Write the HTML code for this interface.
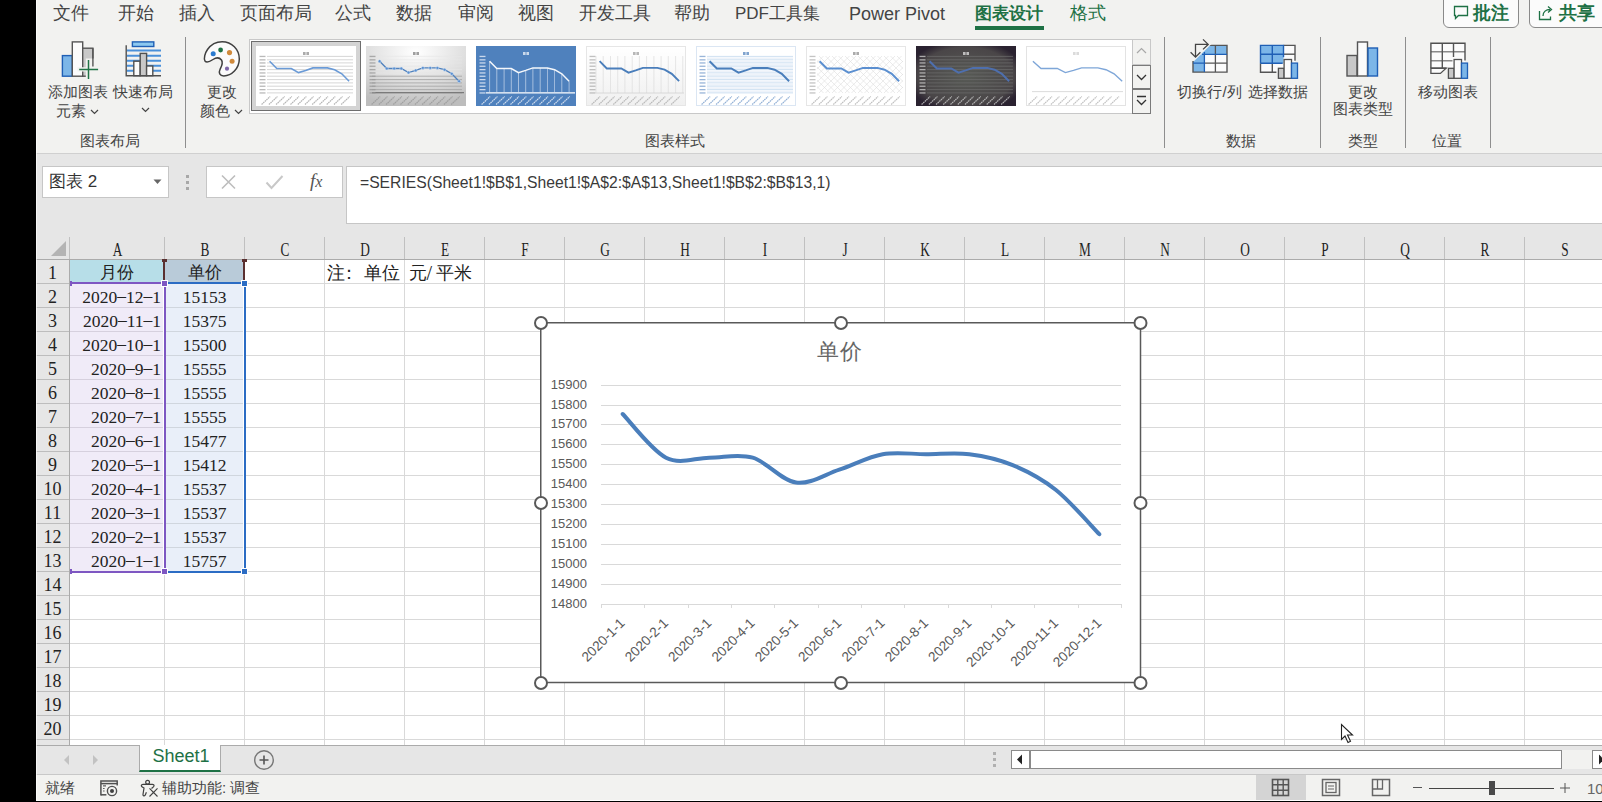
<!DOCTYPE html><html><head><meta charset="utf-8"><style>
*{box-sizing:border-box}
body{margin:0;width:1602px;height:802px;overflow:hidden;position:relative;background:#fff;font-family:"Liberation Sans",sans-serif;color:#444}
.a{position:absolute}
.t{position:absolute;white-space:nowrap;line-height:1}
.serif{font-family:"Liberation Serif",serif}
</style></head><body>

<div class="a" style="left:0;top:0;width:36px;height:802px;background:#000"></div>
<div class="a" style="left:36px;top:0;width:1566px;height:154px;background:#f2f2f0;border-bottom:1px solid #d0d0d0"></div>
<div class="t" style="left:53px;top:4.5px;font-size:17.5px;color:#444">文件</div>
<div class="t" style="left:118px;top:4.5px;font-size:17.5px;color:#444">开始</div>
<div class="t" style="left:179px;top:4.5px;font-size:17.5px;color:#444">插入</div>
<div class="t" style="left:240px;top:4.5px;font-size:17.5px;color:#444">页面布局</div>
<div class="t" style="left:335px;top:4.5px;font-size:17.5px;color:#444">公式</div>
<div class="t" style="left:396px;top:4.5px;font-size:17.5px;color:#444">数据</div>
<div class="t" style="left:458px;top:4.5px;font-size:17.5px;color:#444">审阅</div>
<div class="t" style="left:518px;top:4.5px;font-size:17.5px;color:#444">视图</div>
<div class="t" style="left:579px;top:4.5px;font-size:17.5px;color:#444">开发工具</div>
<div class="t" style="left:674px;top:4.5px;font-size:17.5px;color:#444">帮助</div>
<div class="t" style="left:735px;top:4.5px;font-size:17px;color:#444">PDF工具集</div>
<div class="t" style="left:849px;top:4.5px;font-size:18px;color:#444">Power Pivot</div>
<div class="t" style="left:975px;top:4.5px;font-size:17px;color:#1e7145;font-weight:bold">图表设计</div>
<div class="a" style="left:975px;top:26px;width:69px;height:4px;background:#1e7145"></div>
<div class="t" style="left:1070px;top:4.5px;font-size:17.5px;color:#1e7145">格式</div>
<div class="a" style="left:1443px;top:-6px;width:76px;height:34px;border:1px solid #8a8a8a;border-radius:6px;background:#fbfbfb"></div>
<svg class="a" style="left:1453px;top:5px" width="16" height="15" viewBox="0 0 16 15"><path d="M1.5 1.5h13v9h-9l-3 3v-3h-1z" fill="none" stroke="#1e7145" stroke-width="1.3"/></svg>
<div class="t" style="left:1473px;top:3.5px;font-size:18px;color:#1e7145;font-weight:bold">批注</div>
<div class="a" style="left:1529px;top:-6px;width:90px;height:34px;border:1px solid #8a8a8a;border-radius:6px;background:#fbfbfb"></div>
<svg class="a" style="left:1538px;top:4px" width="17" height="17" viewBox="0 0 17 17"><path d="M1.5 7v8.5h11v-3" fill="none" stroke="#1e7145" stroke-width="1.3"/><path d="M5 12c0-4 3-6.5 7-6.5M10 2.5l3.5 3-3.5 3" fill="none" stroke="#1e7145" stroke-width="1.3"/></svg>
<div class="t" style="left:1559px;top:3.5px;font-size:18px;color:#1e7145;font-weight:bold">共享</div>
<div class="a" style="left:185px;top:37px;width:1px;height:111px;background:#8e8e8e"></div>
<div class="a" style="left:1164px;top:37px;width:1px;height:111px;background:#8e8e8e"></div>
<div class="a" style="left:1320px;top:37px;width:1px;height:111px;background:#8e8e8e"></div>
<div class="a" style="left:1405px;top:37px;width:1px;height:111px;background:#8e8e8e"></div>
<div class="a" style="left:1490px;top:37px;width:1px;height:111px;background:#8e8e8e"></div>
<svg class="a" style="left:56px;top:38px" width="46" height="44" viewBox="56 38 46 44">
<rect x="62.4" y="55.6" width="9.9" height="20.6" fill="#7cb6e8" stroke="#1f5fb5" stroke-width="1.4"/>
<rect x="72.3" y="41.9" width="10.4" height="34.3" fill="#fbfbfb" stroke="#555" stroke-width="1.4"/>
<rect x="82.7" y="48.2" width="10.2" height="28" fill="#c8c8c8" stroke="#555" stroke-width="1.4"/>
<path d="M85.8 58.5H97V81H85.8z M77.5 67.3H100V71.5H77.5z" fill="#f2f2f0"/>
<path d="M92.9 48.2V66.6" stroke="#555" stroke-width="1.4"/>
<path d="M79.2 69.4H98.1M88.5 60V78.9" stroke="#217346" stroke-width="1.5"/>
</svg>
<div class="t" style="left:18.0px;top:84px;width:120px;text-align:center;font-size:15px;color:#444">添加图表</div>
<div class="t" style="left:56px;top:102.5px;font-size:15px;color:#444">元素<svg width="9" height="6" viewBox="0 0 9 6" style="vertical-align:middle;margin-left:4px"><path d="M1 1l3.5 3.5L8 1" fill="none" stroke="#444" stroke-width="1.2"/></svg></div>
<svg class="a" style="left:120px;top:38px" width="46" height="42" viewBox="120 38 46 42">
<g stroke="#4a90d9" stroke-width="2">
<path d="M127 50.6h34M127 55.8h34M127 60.8h34M127 65.8h34M127 70.8h34"/></g>
<rect x="132.4" y="41.9" width="21.4" height="4.6" fill="#8cc8f0" stroke="#1f5fb5" stroke-width="1.4"/>
<rect x="133.8" y="61.2" width="6.4" height="14.5" fill="#fbfbfb" stroke="#505050" stroke-width="1.4"/>
<rect x="140.2" y="53.4" width="6.4" height="22.3" fill="#c8c8c8" stroke="#505050" stroke-width="1.4"/>
<rect x="146.6" y="66" width="6.2" height="9.7" fill="#fbfbfb" stroke="#505050" stroke-width="1.4"/>
<path d="M126.2 45.2v30.5h34.8" fill="none" stroke="#505050" stroke-width="1.4"/>
</svg>
<div class="t" style="left:83.0px;top:84px;width:120px;text-align:center;font-size:15px;color:#444">快速布局</div>
<svg class="a" style="left:141px;top:107px" width="9" height="6" viewBox="0 0 9 6"><path d="M1 1l3.5 3.5L8 1" fill="none" stroke="#444" stroke-width="1.2"/></svg>
<div class="t" style="left:80px;top:133px;font-size:15px;color:#444;">图表布局</div>
<svg class="a" style="left:200px;top:38px" width="44" height="42" viewBox="200 38 44 42">
<path d="M222.1 41.7C231.8 41.7 239.3 49.5 239.3 59C239.3 68.5 231.5 75.9 223.8 75.9C219.5 75.9 218.5 72.5 220 69.5C221.5 66.5 223.5 63 221.5 60C219.5 57.5 216 57.5 213 59.5C210 61.5 206.5 63 205 61C203.5 58.5 205 53 207.5 49.5C211 44.5 216.5 41.7 222.1 41.7Z" fill="#fbfbfb" stroke="#404040" stroke-width="1.5"/>
<circle cx="213.2" cy="53.8" r="2.5" fill="#2a7bd0"/><circle cx="220.6" cy="50" r="2.4" fill="#1e7145"/>
<circle cx="229.5" cy="52.6" r="2.6" fill="#d08a3c"/><circle cx="232.1" cy="61.2" r="2.5" fill="#d08a3c"/>
<circle cx="227" cy="68.7" r="2.1" fill="#7f68a8"/>
</svg>
<div class="t" style="left:162.0px;top:84px;width:120px;text-align:center;font-size:15px;color:#444">更改</div>
<div class="t" style="left:200px;top:102.5px;font-size:15px;color:#444">颜色<svg width="9" height="6" viewBox="0 0 9 6" style="vertical-align:middle;margin-left:4px"><path d="M1 1l3.5 3.5L8 1" fill="none" stroke="#444" stroke-width="1.2"/></svg></div>
<div class="a" style="left:249px;top:39px;width:902px;height:75px;background:#fff;border:1px solid #c8c8c8;border-right:none"></div>
<div class="a" style="left:251px;top:41px;width:110px;height:70px;background:#d4d4d4;border:1px solid #6e6e6e"></div>
<svg class="a" style="left:256px;top:46px" width="100" height="60" viewBox="0 0 100 60"><rect width="100" height="60" fill="#fff"/><line x1="11" x2="97" y1="10.4" y2="10.4" stroke="#c4c4c4" stroke-width=".7"/><line x1="11" x2="97" y1="13.8" y2="13.8" stroke="#c4c4c4" stroke-width=".7"/><line x1="11" x2="97" y1="16.9" y2="16.9" stroke="#c4c4c4" stroke-width=".7"/><line x1="11" x2="97" y1="20.2" y2="20.2" stroke="#c4c4c4" stroke-width=".7"/><line x1="11" x2="97" y1="23.6" y2="23.6" stroke="#c4c4c4" stroke-width=".7"/><line x1="11" x2="97" y1="26.9" y2="26.9" stroke="#c4c4c4" stroke-width=".7"/><line x1="11" x2="97" y1="30.2" y2="30.2" stroke="#c4c4c4" stroke-width=".7"/><line x1="11" x2="97" y1="33.6" y2="33.6" stroke="#c4c4c4" stroke-width=".7"/><line x1="11" x2="97" y1="36.9" y2="36.9" stroke="#c4c4c4" stroke-width=".7"/><line x1="11" x2="97" y1="40.2" y2="40.2" stroke="#c4c4c4" stroke-width=".7"/><line x1="11" x2="97" y1="43.6" y2="43.6" stroke="#c4c4c4" stroke-width=".7"/><line x1="11" x2="97" y1="46.9" y2="46.9" stroke="#c4c4c4" stroke-width=".7"/><path d="M13.6 15.2 L20.8 22.5 L28.1 22.5 L35.3 22.5 L42.5 26.6 L49.7 24.4 L56.9 21.9 L64.2 21.9 L71.4 21.9 L78.6 23.7 L85.8 27.8 L93.1 35.2" fill="none" stroke="#6a9ad6" stroke-width="1.6"/><rect x="3.5" y="9.8" width="6" height="1.3" fill="#a8a8a8" opacity=".8"/><rect x="3.5" y="13.2" width="6" height="1.3" fill="#a8a8a8" opacity=".8"/><rect x="3.5" y="16.3" width="6" height="1.3" fill="#a8a8a8" opacity=".8"/><rect x="3.5" y="19.6" width="6" height="1.3" fill="#a8a8a8" opacity=".8"/><rect x="3.5" y="23.0" width="6" height="1.3" fill="#a8a8a8" opacity=".8"/><rect x="3.5" y="26.3" width="6" height="1.3" fill="#a8a8a8" opacity=".8"/><rect x="3.5" y="29.6" width="6" height="1.3" fill="#a8a8a8" opacity=".8"/><rect x="3.5" y="33.0" width="6" height="1.3" fill="#a8a8a8" opacity=".8"/><rect x="3.5" y="36.3" width="6" height="1.3" fill="#a8a8a8" opacity=".8"/><rect x="3.5" y="39.6" width="6" height="1.3" fill="#a8a8a8" opacity=".8"/><rect x="3.5" y="43.0" width="6" height="1.3" fill="#a8a8a8" opacity=".8"/><rect x="3.5" y="46.3" width="6" height="1.3" fill="#a8a8a8" opacity=".8"/><line x1="5.6" y1="58.5" x2="14.1" y2="50.5" stroke="#a8a8a8" stroke-width="1.2" stroke-dasharray="1.6 .6" opacity=".85"/><line x1="12.9" y1="58.5" x2="21.4" y2="50.5" stroke="#a8a8a8" stroke-width="1.2" stroke-dasharray="1.6 .6" opacity=".85"/><line x1="20.1" y1="58.5" x2="28.6" y2="50.5" stroke="#a8a8a8" stroke-width="1.2" stroke-dasharray="1.6 .6" opacity=".85"/><line x1="27.3" y1="58.5" x2="35.8" y2="50.5" stroke="#a8a8a8" stroke-width="1.2" stroke-dasharray="1.6 .6" opacity=".85"/><line x1="34.5" y1="58.5" x2="43.0" y2="50.5" stroke="#a8a8a8" stroke-width="1.2" stroke-dasharray="1.6 .6" opacity=".85"/><line x1="41.8" y1="58.5" x2="50.3" y2="50.5" stroke="#a8a8a8" stroke-width="1.2" stroke-dasharray="1.6 .6" opacity=".85"/><line x1="49.0" y1="58.5" x2="57.5" y2="50.5" stroke="#a8a8a8" stroke-width="1.2" stroke-dasharray="1.6 .6" opacity=".85"/><line x1="56.2" y1="58.5" x2="64.8" y2="50.5" stroke="#a8a8a8" stroke-width="1.2" stroke-dasharray="1.6 .6" opacity=".85"/><line x1="63.5" y1="58.5" x2="72.0" y2="50.5" stroke="#a8a8a8" stroke-width="1.2" stroke-dasharray="1.6 .6" opacity=".85"/><line x1="70.7" y1="58.5" x2="79.2" y2="50.5" stroke="#a8a8a8" stroke-width="1.2" stroke-dasharray="1.6 .6" opacity=".85"/><line x1="78.0" y1="58.5" x2="86.5" y2="50.5" stroke="#a8a8a8" stroke-width="1.2" stroke-dasharray="1.6 .6" opacity=".85"/><line x1="85.2" y1="58.5" x2="93.7" y2="50.5" stroke="#a8a8a8" stroke-width="1.2" stroke-dasharray="1.6 .6" opacity=".85"/><rect x="47" y="6" width="2.6" height="3" fill="#888" opacity=".7"/><rect x="50.4" y="6" width="2.6" height="3" fill="#888" opacity=".7"/></svg>
<svg class="a" style="left:366px;top:46px" width="100" height="60" viewBox="0 0 100 60"><defs><radialGradient id="sg" cx=".5" cy=".1" r=".9"><stop offset="0" stop-color="#ffffff"/><stop offset=".6" stop-color="#dcdcdc"/><stop offset="1" stop-color="#bdbdbd"/></radialGradient></defs><rect width="100" height="60" fill="url(#sg)"/><line x1="6" x2="96" y1="10.4" y2="10.4" stroke="#e6e6e6" stroke-width=".6"/><line x1="6" x2="96" y1="13.8" y2="13.8" stroke="#e6e6e6" stroke-width=".6"/><line x1="6" x2="96" y1="16.9" y2="16.9" stroke="#e6e6e6" stroke-width=".6"/><line x1="6" x2="96" y1="20.2" y2="20.2" stroke="#e6e6e6" stroke-width=".6"/><line x1="6" x2="96" y1="23.6" y2="23.6" stroke="#e6e6e6" stroke-width=".6"/><line x1="6" x2="96" y1="26.9" y2="26.9" stroke="#e6e6e6" stroke-width=".6"/><line x1="6" x2="96" y1="30.2" y2="30.2" stroke="#a8a8a8" stroke-width=".9"/><line x1="6" x2="96" y1="33.6" y2="33.6" stroke="#a8a8a8" stroke-width=".9"/><line x1="6" x2="96" y1="36.9" y2="36.9" stroke="#a8a8a8" stroke-width=".9"/><line x1="6" x2="96" y1="40.2" y2="40.2" stroke="#a8a8a8" stroke-width=".9"/><line x1="6" x2="96" y1="43.6" y2="43.6" stroke="#a8a8a8" stroke-width=".9"/><line x1="6" x2="96" y1="46.9" y2="46.9" stroke="#a8a8a8" stroke-width=".9"/><line x1="6" x2="98" y1="46.6" y2="46.6" stroke="#7a7a7a" stroke-width="1.3"/><path d="M13.6 15.2 L20.8 22.5 L28.1 22.5 L35.3 22.5 L42.5 26.6 L49.7 24.4 L56.9 21.9 L64.2 21.9 L71.4 21.9 L78.6 23.7 L85.8 27.8 L93.1 35.2" fill="none" stroke="#4f81bd" stroke-width="1.3"/><circle cx="13.6" cy="15.2" r="1.5" fill="#5a8fd0" stroke="#d8e6f5" stroke-width=".5"/><circle cx="20.8" cy="22.5" r="1.5" fill="#5a8fd0" stroke="#d8e6f5" stroke-width=".5"/><circle cx="28.1" cy="22.5" r="1.5" fill="#5a8fd0" stroke="#d8e6f5" stroke-width=".5"/><circle cx="35.3" cy="22.5" r="1.5" fill="#5a8fd0" stroke="#d8e6f5" stroke-width=".5"/><circle cx="42.5" cy="26.6" r="1.5" fill="#5a8fd0" stroke="#d8e6f5" stroke-width=".5"/><circle cx="49.7" cy="24.4" r="1.5" fill="#5a8fd0" stroke="#d8e6f5" stroke-width=".5"/><circle cx="56.9" cy="21.9" r="1.5" fill="#5a8fd0" stroke="#d8e6f5" stroke-width=".5"/><circle cx="64.2" cy="21.9" r="1.5" fill="#5a8fd0" stroke="#d8e6f5" stroke-width=".5"/><circle cx="71.4" cy="21.9" r="1.5" fill="#5a8fd0" stroke="#d8e6f5" stroke-width=".5"/><circle cx="78.6" cy="23.7" r="1.5" fill="#5a8fd0" stroke="#d8e6f5" stroke-width=".5"/><circle cx="85.8" cy="27.8" r="1.5" fill="#5a8fd0" stroke="#d8e6f5" stroke-width=".5"/><circle cx="93.1" cy="35.2" r="1.5" fill="#5a8fd0" stroke="#d8e6f5" stroke-width=".5"/><rect x="3.5" y="9.8" width="6" height="1.3" fill="#9a9a9a" opacity=".8"/><rect x="3.5" y="13.2" width="6" height="1.3" fill="#9a9a9a" opacity=".8"/><rect x="3.5" y="16.3" width="6" height="1.3" fill="#9a9a9a" opacity=".8"/><rect x="3.5" y="19.6" width="6" height="1.3" fill="#9a9a9a" opacity=".8"/><rect x="3.5" y="23.0" width="6" height="1.3" fill="#9a9a9a" opacity=".8"/><rect x="3.5" y="26.3" width="6" height="1.3" fill="#9a9a9a" opacity=".8"/><rect x="3.5" y="29.6" width="6" height="1.3" fill="#9a9a9a" opacity=".8"/><rect x="3.5" y="33.0" width="6" height="1.3" fill="#9a9a9a" opacity=".8"/><rect x="3.5" y="36.3" width="6" height="1.3" fill="#9a9a9a" opacity=".8"/><rect x="3.5" y="39.6" width="6" height="1.3" fill="#9a9a9a" opacity=".8"/><rect x="3.5" y="43.0" width="6" height="1.3" fill="#9a9a9a" opacity=".8"/><rect x="3.5" y="46.3" width="6" height="1.3" fill="#9a9a9a" opacity=".8"/><line x1="5.6" y1="58.5" x2="14.1" y2="50.5" stroke="#9a9a9a" stroke-width="1.2" stroke-dasharray="1.6 .6" opacity=".85"/><line x1="12.9" y1="58.5" x2="21.4" y2="50.5" stroke="#9a9a9a" stroke-width="1.2" stroke-dasharray="1.6 .6" opacity=".85"/><line x1="20.1" y1="58.5" x2="28.6" y2="50.5" stroke="#9a9a9a" stroke-width="1.2" stroke-dasharray="1.6 .6" opacity=".85"/><line x1="27.3" y1="58.5" x2="35.8" y2="50.5" stroke="#9a9a9a" stroke-width="1.2" stroke-dasharray="1.6 .6" opacity=".85"/><line x1="34.5" y1="58.5" x2="43.0" y2="50.5" stroke="#9a9a9a" stroke-width="1.2" stroke-dasharray="1.6 .6" opacity=".85"/><line x1="41.8" y1="58.5" x2="50.3" y2="50.5" stroke="#9a9a9a" stroke-width="1.2" stroke-dasharray="1.6 .6" opacity=".85"/><line x1="49.0" y1="58.5" x2="57.5" y2="50.5" stroke="#9a9a9a" stroke-width="1.2" stroke-dasharray="1.6 .6" opacity=".85"/><line x1="56.2" y1="58.5" x2="64.8" y2="50.5" stroke="#9a9a9a" stroke-width="1.2" stroke-dasharray="1.6 .6" opacity=".85"/><line x1="63.5" y1="58.5" x2="72.0" y2="50.5" stroke="#9a9a9a" stroke-width="1.2" stroke-dasharray="1.6 .6" opacity=".85"/><line x1="70.7" y1="58.5" x2="79.2" y2="50.5" stroke="#9a9a9a" stroke-width="1.2" stroke-dasharray="1.6 .6" opacity=".85"/><line x1="78.0" y1="58.5" x2="86.5" y2="50.5" stroke="#9a9a9a" stroke-width="1.2" stroke-dasharray="1.6 .6" opacity=".85"/><line x1="85.2" y1="58.5" x2="93.7" y2="50.5" stroke="#9a9a9a" stroke-width="1.2" stroke-dasharray="1.6 .6" opacity=".85"/><rect x="47" y="6" width="2.6" height="3" fill="#777" opacity=".7"/><rect x="50.4" y="6" width="2.6" height="3" fill="#777" opacity=".7"/></svg>
<svg class="a" style="left:476px;top:46px" width="100" height="60" viewBox="0 0 100 60"><rect width="100" height="60" fill="#4f81bd"/><line x1="13.6" y1="15.2" x2="13.6" y2="46" stroke="#dfe9f5" stroke-width=".8" opacity=".75"/><line x1="20.8" y1="22.5" x2="20.8" y2="46" stroke="#dfe9f5" stroke-width=".8" opacity=".75"/><line x1="28.1" y1="22.5" x2="28.1" y2="46" stroke="#dfe9f5" stroke-width=".8" opacity=".75"/><line x1="35.3" y1="22.5" x2="35.3" y2="46" stroke="#dfe9f5" stroke-width=".8" opacity=".75"/><line x1="42.5" y1="26.6" x2="42.5" y2="46" stroke="#dfe9f5" stroke-width=".8" opacity=".75"/><line x1="49.7" y1="24.4" x2="49.7" y2="46" stroke="#dfe9f5" stroke-width=".8" opacity=".75"/><line x1="56.9" y1="21.9" x2="56.9" y2="46" stroke="#dfe9f5" stroke-width=".8" opacity=".75"/><line x1="64.2" y1="21.9" x2="64.2" y2="46" stroke="#dfe9f5" stroke-width=".8" opacity=".75"/><line x1="71.4" y1="21.9" x2="71.4" y2="46" stroke="#dfe9f5" stroke-width=".8" opacity=".75"/><line x1="78.6" y1="23.7" x2="78.6" y2="46" stroke="#dfe9f5" stroke-width=".8" opacity=".75"/><line x1="85.8" y1="27.8" x2="85.8" y2="46" stroke="#dfe9f5" stroke-width=".8" opacity=".75"/><line x1="93.1" y1="35.2" x2="93.1" y2="46" stroke="#dfe9f5" stroke-width=".8" opacity=".75"/><line x1="10" x2="99" y1="46.8" y2="46.8" stroke="#ffffff" stroke-width="1.3"/><path d="M13.6 15.2 L20.8 22.5 L28.1 22.5 L35.3 22.5 L42.5 26.6 L49.7 24.4 L56.9 21.9 L64.2 21.9 L71.4 21.9 L78.6 23.7 L85.8 27.8 L93.1 35.2" fill="none" stroke="#f4f7fb" stroke-width="1.5"/><rect x="3.5" y="9.8" width="6" height="1.3" fill="#e8eef7" opacity=".8"/><rect x="3.5" y="13.2" width="6" height="1.3" fill="#e8eef7" opacity=".8"/><rect x="3.5" y="16.3" width="6" height="1.3" fill="#e8eef7" opacity=".8"/><rect x="3.5" y="19.6" width="6" height="1.3" fill="#e8eef7" opacity=".8"/><rect x="3.5" y="23.0" width="6" height="1.3" fill="#e8eef7" opacity=".8"/><rect x="3.5" y="26.3" width="6" height="1.3" fill="#e8eef7" opacity=".8"/><rect x="3.5" y="29.6" width="6" height="1.3" fill="#e8eef7" opacity=".8"/><rect x="3.5" y="33.0" width="6" height="1.3" fill="#e8eef7" opacity=".8"/><rect x="3.5" y="36.3" width="6" height="1.3" fill="#e8eef7" opacity=".8"/><rect x="3.5" y="39.6" width="6" height="1.3" fill="#e8eef7" opacity=".8"/><rect x="3.5" y="43.0" width="6" height="1.3" fill="#e8eef7" opacity=".8"/><rect x="3.5" y="46.3" width="6" height="1.3" fill="#e8eef7" opacity=".8"/><line x1="5.6" y1="58.5" x2="14.1" y2="50.5" stroke="#e8eef7" stroke-width="1.2" stroke-dasharray="1.6 .6" opacity=".85"/><line x1="12.9" y1="58.5" x2="21.4" y2="50.5" stroke="#e8eef7" stroke-width="1.2" stroke-dasharray="1.6 .6" opacity=".85"/><line x1="20.1" y1="58.5" x2="28.6" y2="50.5" stroke="#e8eef7" stroke-width="1.2" stroke-dasharray="1.6 .6" opacity=".85"/><line x1="27.3" y1="58.5" x2="35.8" y2="50.5" stroke="#e8eef7" stroke-width="1.2" stroke-dasharray="1.6 .6" opacity=".85"/><line x1="34.5" y1="58.5" x2="43.0" y2="50.5" stroke="#e8eef7" stroke-width="1.2" stroke-dasharray="1.6 .6" opacity=".85"/><line x1="41.8" y1="58.5" x2="50.3" y2="50.5" stroke="#e8eef7" stroke-width="1.2" stroke-dasharray="1.6 .6" opacity=".85"/><line x1="49.0" y1="58.5" x2="57.5" y2="50.5" stroke="#e8eef7" stroke-width="1.2" stroke-dasharray="1.6 .6" opacity=".85"/><line x1="56.2" y1="58.5" x2="64.8" y2="50.5" stroke="#e8eef7" stroke-width="1.2" stroke-dasharray="1.6 .6" opacity=".85"/><line x1="63.5" y1="58.5" x2="72.0" y2="50.5" stroke="#e8eef7" stroke-width="1.2" stroke-dasharray="1.6 .6" opacity=".85"/><line x1="70.7" y1="58.5" x2="79.2" y2="50.5" stroke="#e8eef7" stroke-width="1.2" stroke-dasharray="1.6 .6" opacity=".85"/><line x1="78.0" y1="58.5" x2="86.5" y2="50.5" stroke="#e8eef7" stroke-width="1.2" stroke-dasharray="1.6 .6" opacity=".85"/><line x1="85.2" y1="58.5" x2="93.7" y2="50.5" stroke="#e8eef7" stroke-width="1.2" stroke-dasharray="1.6 .6" opacity=".85"/><rect x="47" y="6" width="2.6" height="3" fill="#fff" opacity=".7"/><rect x="50.4" y="6" width="2.6" height="3" fill="#fff" opacity=".7"/></svg>
<svg class="a" style="left:586px;top:46px" width="100" height="60" viewBox="0 0 100 60"><defs><linearGradient id="pg" x1="0" y1="0" x2="0" y2="1"><stop offset="0" stop-color="#ffffff"/><stop offset="1" stop-color="#f0f0f0"/></linearGradient></defs><rect x=".5" y=".5" width="99" height="59" fill="url(#pg)" stroke="#e6e6e6"/><line x1="10.0" x2="10.0" y1="10" y2="47" stroke="#dcdcdc" stroke-width=".7"/><line x1="17.2" x2="17.2" y1="10" y2="47" stroke="#dcdcdc" stroke-width=".7"/><line x1="24.5" x2="24.5" y1="10" y2="47" stroke="#dcdcdc" stroke-width=".7"/><line x1="31.7" x2="31.7" y1="10" y2="47" stroke="#dcdcdc" stroke-width=".7"/><line x1="38.9" x2="38.9" y1="10" y2="47" stroke="#dcdcdc" stroke-width=".7"/><line x1="46.2" x2="46.2" y1="10" y2="47" stroke="#dcdcdc" stroke-width=".7"/><line x1="53.4" x2="53.4" y1="10" y2="47" stroke="#dcdcdc" stroke-width=".7"/><line x1="60.6" x2="60.6" y1="10" y2="47" stroke="#dcdcdc" stroke-width=".7"/><line x1="67.9" x2="67.9" y1="10" y2="47" stroke="#dcdcdc" stroke-width=".7"/><line x1="75.1" x2="75.1" y1="10" y2="47" stroke="#dcdcdc" stroke-width=".7"/><line x1="82.3" x2="82.3" y1="10" y2="47" stroke="#dcdcdc" stroke-width=".7"/><line x1="89.6" x2="89.6" y1="10" y2="47" stroke="#dcdcdc" stroke-width=".7"/><line x1="96.8" x2="96.8" y1="10" y2="47" stroke="#dcdcdc" stroke-width=".7"/><line x1="10" x2="98" y1="47" y2="47" stroke="#d0d0d0" stroke-width=".8"/><path d="M13.6 15.2 L20.8 22.5 L28.1 22.5 L35.3 22.5 L42.5 26.6 L49.7 24.4 L56.9 21.9 L64.2 21.9 L71.4 21.9 L78.6 23.7 L85.8 27.8 L93.1 35.2" fill="none" stroke="#4a7ebb" stroke-width="1.9"/><rect x="3.5" y="9.8" width="6" height="1.3" fill="#b0b0b0" opacity=".8"/><rect x="3.5" y="13.2" width="6" height="1.3" fill="#b0b0b0" opacity=".8"/><rect x="3.5" y="16.3" width="6" height="1.3" fill="#b0b0b0" opacity=".8"/><rect x="3.5" y="19.6" width="6" height="1.3" fill="#b0b0b0" opacity=".8"/><rect x="3.5" y="23.0" width="6" height="1.3" fill="#b0b0b0" opacity=".8"/><rect x="3.5" y="26.3" width="6" height="1.3" fill="#b0b0b0" opacity=".8"/><rect x="3.5" y="29.6" width="6" height="1.3" fill="#b0b0b0" opacity=".8"/><rect x="3.5" y="33.0" width="6" height="1.3" fill="#b0b0b0" opacity=".8"/><rect x="3.5" y="36.3" width="6" height="1.3" fill="#b0b0b0" opacity=".8"/><rect x="3.5" y="39.6" width="6" height="1.3" fill="#b0b0b0" opacity=".8"/><rect x="3.5" y="43.0" width="6" height="1.3" fill="#b0b0b0" opacity=".8"/><rect x="3.5" y="46.3" width="6" height="1.3" fill="#b0b0b0" opacity=".8"/><line x1="5.6" y1="58.5" x2="14.1" y2="50.5" stroke="#b0b0b0" stroke-width="1.2" stroke-dasharray="1.6 .6" opacity=".85"/><line x1="12.9" y1="58.5" x2="21.4" y2="50.5" stroke="#b0b0b0" stroke-width="1.2" stroke-dasharray="1.6 .6" opacity=".85"/><line x1="20.1" y1="58.5" x2="28.6" y2="50.5" stroke="#b0b0b0" stroke-width="1.2" stroke-dasharray="1.6 .6" opacity=".85"/><line x1="27.3" y1="58.5" x2="35.8" y2="50.5" stroke="#b0b0b0" stroke-width="1.2" stroke-dasharray="1.6 .6" opacity=".85"/><line x1="34.5" y1="58.5" x2="43.0" y2="50.5" stroke="#b0b0b0" stroke-width="1.2" stroke-dasharray="1.6 .6" opacity=".85"/><line x1="41.8" y1="58.5" x2="50.3" y2="50.5" stroke="#b0b0b0" stroke-width="1.2" stroke-dasharray="1.6 .6" opacity=".85"/><line x1="49.0" y1="58.5" x2="57.5" y2="50.5" stroke="#b0b0b0" stroke-width="1.2" stroke-dasharray="1.6 .6" opacity=".85"/><line x1="56.2" y1="58.5" x2="64.8" y2="50.5" stroke="#b0b0b0" stroke-width="1.2" stroke-dasharray="1.6 .6" opacity=".85"/><line x1="63.5" y1="58.5" x2="72.0" y2="50.5" stroke="#b0b0b0" stroke-width="1.2" stroke-dasharray="1.6 .6" opacity=".85"/><line x1="70.7" y1="58.5" x2="79.2" y2="50.5" stroke="#b0b0b0" stroke-width="1.2" stroke-dasharray="1.6 .6" opacity=".85"/><line x1="78.0" y1="58.5" x2="86.5" y2="50.5" stroke="#b0b0b0" stroke-width="1.2" stroke-dasharray="1.6 .6" opacity=".85"/><line x1="85.2" y1="58.5" x2="93.7" y2="50.5" stroke="#b0b0b0" stroke-width="1.2" stroke-dasharray="1.6 .6" opacity=".85"/><rect x="47" y="6" width="2.6" height="3" fill="#999" opacity=".7"/><rect x="50.4" y="6" width="2.6" height="3" fill="#999" opacity=".7"/></svg>
<svg class="a" style="left:696px;top:46px" width="100" height="60" viewBox="0 0 100 60"><rect x=".5" y=".5" width="99" height="59" fill="#fff" stroke="#dbe6f3"/><rect x="11" y="11.4" width="86" height="1.8" fill="#eef3fa"/><rect x="11" y="14.8" width="86" height="1.8" fill="#eef3fa"/><rect x="11" y="17.9" width="86" height="1.8" fill="#eef3fa"/><rect x="11" y="21.2" width="86" height="1.8" fill="#eef3fa"/><rect x="11" y="24.6" width="86" height="1.8" fill="#eef3fa"/><rect x="11" y="27.9" width="86" height="1.8" fill="#eef3fa"/><rect x="11" y="31.2" width="86" height="1.8" fill="#eef3fa"/><rect x="11" y="34.6" width="86" height="1.8" fill="#eef3fa"/><rect x="11" y="37.9" width="86" height="1.8" fill="#eef3fa"/><rect x="11" y="41.2" width="86" height="1.8" fill="#eef3fa"/><rect x="11" y="44.6" width="86" height="1.8" fill="#eef3fa"/><line x1="11" x2="97" y1="10.4" y2="10.4" stroke="#bcd4ec" stroke-width=".7"/><line x1="11" x2="97" y1="13.8" y2="13.8" stroke="#bcd4ec" stroke-width=".7"/><line x1="11" x2="97" y1="16.9" y2="16.9" stroke="#bcd4ec" stroke-width=".7"/><line x1="11" x2="97" y1="20.2" y2="20.2" stroke="#bcd4ec" stroke-width=".7"/><line x1="11" x2="97" y1="23.6" y2="23.6" stroke="#bcd4ec" stroke-width=".7"/><line x1="11" x2="97" y1="26.9" y2="26.9" stroke="#bcd4ec" stroke-width=".7"/><line x1="11" x2="97" y1="30.2" y2="30.2" stroke="#bcd4ec" stroke-width=".7"/><line x1="11" x2="97" y1="33.6" y2="33.6" stroke="#bcd4ec" stroke-width=".7"/><line x1="11" x2="97" y1="36.9" y2="36.9" stroke="#bcd4ec" stroke-width=".7"/><line x1="11" x2="97" y1="40.2" y2="40.2" stroke="#bcd4ec" stroke-width=".7"/><line x1="11" x2="97" y1="43.6" y2="43.6" stroke="#bcd4ec" stroke-width=".7"/><line x1="11" x2="97" y1="46.9" y2="46.9" stroke="#bcd4ec" stroke-width=".7"/><path d="M13.6 15.2 L20.8 22.5 L28.1 22.5 L35.3 22.5 L42.5 26.6 L49.7 24.4 L56.9 21.9 L64.2 21.9 L71.4 21.9 L78.6 23.7 L85.8 27.8 L93.1 35.2" fill="none" stroke="#4a7ebb" stroke-width="2"/><rect x="3.5" y="9.8" width="6" height="1.3" fill="#7fa3cf" opacity=".8"/><rect x="3.5" y="13.2" width="6" height="1.3" fill="#7fa3cf" opacity=".8"/><rect x="3.5" y="16.3" width="6" height="1.3" fill="#7fa3cf" opacity=".8"/><rect x="3.5" y="19.6" width="6" height="1.3" fill="#7fa3cf" opacity=".8"/><rect x="3.5" y="23.0" width="6" height="1.3" fill="#7fa3cf" opacity=".8"/><rect x="3.5" y="26.3" width="6" height="1.3" fill="#7fa3cf" opacity=".8"/><rect x="3.5" y="29.6" width="6" height="1.3" fill="#7fa3cf" opacity=".8"/><rect x="3.5" y="33.0" width="6" height="1.3" fill="#7fa3cf" opacity=".8"/><rect x="3.5" y="36.3" width="6" height="1.3" fill="#7fa3cf" opacity=".8"/><rect x="3.5" y="39.6" width="6" height="1.3" fill="#7fa3cf" opacity=".8"/><rect x="3.5" y="43.0" width="6" height="1.3" fill="#7fa3cf" opacity=".8"/><rect x="3.5" y="46.3" width="6" height="1.3" fill="#7fa3cf" opacity=".8"/><line x1="5.6" y1="58.5" x2="14.1" y2="50.5" stroke="#7fa3cf" stroke-width="1.2" stroke-dasharray="1.6 .6" opacity=".85"/><line x1="12.9" y1="58.5" x2="21.4" y2="50.5" stroke="#7fa3cf" stroke-width="1.2" stroke-dasharray="1.6 .6" opacity=".85"/><line x1="20.1" y1="58.5" x2="28.6" y2="50.5" stroke="#7fa3cf" stroke-width="1.2" stroke-dasharray="1.6 .6" opacity=".85"/><line x1="27.3" y1="58.5" x2="35.8" y2="50.5" stroke="#7fa3cf" stroke-width="1.2" stroke-dasharray="1.6 .6" opacity=".85"/><line x1="34.5" y1="58.5" x2="43.0" y2="50.5" stroke="#7fa3cf" stroke-width="1.2" stroke-dasharray="1.6 .6" opacity=".85"/><line x1="41.8" y1="58.5" x2="50.3" y2="50.5" stroke="#7fa3cf" stroke-width="1.2" stroke-dasharray="1.6 .6" opacity=".85"/><line x1="49.0" y1="58.5" x2="57.5" y2="50.5" stroke="#7fa3cf" stroke-width="1.2" stroke-dasharray="1.6 .6" opacity=".85"/><line x1="56.2" y1="58.5" x2="64.8" y2="50.5" stroke="#7fa3cf" stroke-width="1.2" stroke-dasharray="1.6 .6" opacity=".85"/><line x1="63.5" y1="58.5" x2="72.0" y2="50.5" stroke="#7fa3cf" stroke-width="1.2" stroke-dasharray="1.6 .6" opacity=".85"/><line x1="70.7" y1="58.5" x2="79.2" y2="50.5" stroke="#7fa3cf" stroke-width="1.2" stroke-dasharray="1.6 .6" opacity=".85"/><line x1="78.0" y1="58.5" x2="86.5" y2="50.5" stroke="#7fa3cf" stroke-width="1.2" stroke-dasharray="1.6 .6" opacity=".85"/><line x1="85.2" y1="58.5" x2="93.7" y2="50.5" stroke="#7fa3cf" stroke-width="1.2" stroke-dasharray="1.6 .6" opacity=".85"/><rect x="47" y="6" width="2.6" height="3" fill="#4a7ebb" opacity=".7"/><rect x="50.4" y="6" width="2.6" height="3" fill="#4a7ebb" opacity=".7"/></svg>
<svg class="a" style="left:806px;top:46px" width="100" height="60" viewBox="0 0 100 60"><rect x=".5" y=".5" width="99" height="59" fill="#fff" stroke="#e6e6e6"/><clipPath id="hc"><rect x="11" y="10" width="86" height="37"/></clipPath><g clip-path="url(#hc)" stroke="#dddddd" stroke-width=".6"><line x1="-39.0" y1="10" x2="-2.0" y2="47"/><line x1="-2.0" y1="10" x2="-39.0" y2="47"/><line x1="-32.5" y1="10" x2="4.5" y2="47"/><line x1="4.5" y1="10" x2="-32.5" y2="47"/><line x1="-26.0" y1="10" x2="11.0" y2="47"/><line x1="11.0" y1="10" x2="-26.0" y2="47"/><line x1="-19.5" y1="10" x2="17.5" y2="47"/><line x1="17.5" y1="10" x2="-19.5" y2="47"/><line x1="-13.0" y1="10" x2="24.0" y2="47"/><line x1="24.0" y1="10" x2="-13.0" y2="47"/><line x1="-6.5" y1="10" x2="30.5" y2="47"/><line x1="30.5" y1="10" x2="-6.5" y2="47"/><line x1="0.0" y1="10" x2="37.0" y2="47"/><line x1="37.0" y1="10" x2="0.0" y2="47"/><line x1="6.5" y1="10" x2="43.5" y2="47"/><line x1="43.5" y1="10" x2="6.5" y2="47"/><line x1="13.0" y1="10" x2="50.0" y2="47"/><line x1="50.0" y1="10" x2="13.0" y2="47"/><line x1="19.5" y1="10" x2="56.5" y2="47"/><line x1="56.5" y1="10" x2="19.5" y2="47"/><line x1="26.0" y1="10" x2="63.0" y2="47"/><line x1="63.0" y1="10" x2="26.0" y2="47"/><line x1="32.5" y1="10" x2="69.5" y2="47"/><line x1="69.5" y1="10" x2="32.5" y2="47"/><line x1="39.0" y1="10" x2="76.0" y2="47"/><line x1="76.0" y1="10" x2="39.0" y2="47"/><line x1="45.5" y1="10" x2="82.5" y2="47"/><line x1="82.5" y1="10" x2="45.5" y2="47"/><line x1="52.0" y1="10" x2="89.0" y2="47"/><line x1="89.0" y1="10" x2="52.0" y2="47"/><line x1="58.5" y1="10" x2="95.5" y2="47"/><line x1="95.5" y1="10" x2="58.5" y2="47"/><line x1="65.0" y1="10" x2="102.0" y2="47"/><line x1="102.0" y1="10" x2="65.0" y2="47"/><line x1="71.5" y1="10" x2="108.5" y2="47"/><line x1="108.5" y1="10" x2="71.5" y2="47"/><line x1="78.0" y1="10" x2="115.0" y2="47"/><line x1="115.0" y1="10" x2="78.0" y2="47"/><line x1="84.5" y1="10" x2="121.5" y2="47"/><line x1="121.5" y1="10" x2="84.5" y2="47"/><line x1="91.0" y1="10" x2="128.0" y2="47"/><line x1="128.0" y1="10" x2="91.0" y2="47"/><line x1="97.5" y1="10" x2="134.5" y2="47"/><line x1="134.5" y1="10" x2="97.5" y2="47"/><line x1="104.0" y1="10" x2="141.0" y2="47"/><line x1="141.0" y1="10" x2="104.0" y2="47"/><line x1="110.5" y1="10" x2="147.5" y2="47"/><line x1="147.5" y1="10" x2="110.5" y2="47"/><line x1="117.0" y1="10" x2="154.0" y2="47"/><line x1="154.0" y1="10" x2="117.0" y2="47"/><line x1="123.5" y1="10" x2="160.5" y2="47"/><line x1="160.5" y1="10" x2="123.5" y2="47"/></g><path d="M13.6 15.2 L20.8 22.5 L28.1 22.5 L35.3 22.5 L42.5 26.6 L49.7 24.4 L56.9 21.9 L64.2 21.9 L71.4 21.9 L78.6 23.7 L85.8 27.8 L93.1 35.2" fill="none" stroke="#5b8fd0" stroke-width="2"/><rect x="3.5" y="9.8" width="6" height="1.3" fill="#b5b5b5" opacity=".8"/><rect x="3.5" y="13.2" width="6" height="1.3" fill="#b5b5b5" opacity=".8"/><rect x="3.5" y="16.3" width="6" height="1.3" fill="#b5b5b5" opacity=".8"/><rect x="3.5" y="19.6" width="6" height="1.3" fill="#b5b5b5" opacity=".8"/><rect x="3.5" y="23.0" width="6" height="1.3" fill="#b5b5b5" opacity=".8"/><rect x="3.5" y="26.3" width="6" height="1.3" fill="#b5b5b5" opacity=".8"/><rect x="3.5" y="29.6" width="6" height="1.3" fill="#b5b5b5" opacity=".8"/><rect x="3.5" y="33.0" width="6" height="1.3" fill="#b5b5b5" opacity=".8"/><rect x="3.5" y="36.3" width="6" height="1.3" fill="#b5b5b5" opacity=".8"/><rect x="3.5" y="39.6" width="6" height="1.3" fill="#b5b5b5" opacity=".8"/><rect x="3.5" y="43.0" width="6" height="1.3" fill="#b5b5b5" opacity=".8"/><rect x="3.5" y="46.3" width="6" height="1.3" fill="#b5b5b5" opacity=".8"/><line x1="5.6" y1="58.5" x2="14.1" y2="50.5" stroke="#b5b5b5" stroke-width="1.2" stroke-dasharray="1.6 .6" opacity=".85"/><line x1="12.9" y1="58.5" x2="21.4" y2="50.5" stroke="#b5b5b5" stroke-width="1.2" stroke-dasharray="1.6 .6" opacity=".85"/><line x1="20.1" y1="58.5" x2="28.6" y2="50.5" stroke="#b5b5b5" stroke-width="1.2" stroke-dasharray="1.6 .6" opacity=".85"/><line x1="27.3" y1="58.5" x2="35.8" y2="50.5" stroke="#b5b5b5" stroke-width="1.2" stroke-dasharray="1.6 .6" opacity=".85"/><line x1="34.5" y1="58.5" x2="43.0" y2="50.5" stroke="#b5b5b5" stroke-width="1.2" stroke-dasharray="1.6 .6" opacity=".85"/><line x1="41.8" y1="58.5" x2="50.3" y2="50.5" stroke="#b5b5b5" stroke-width="1.2" stroke-dasharray="1.6 .6" opacity=".85"/><line x1="49.0" y1="58.5" x2="57.5" y2="50.5" stroke="#b5b5b5" stroke-width="1.2" stroke-dasharray="1.6 .6" opacity=".85"/><line x1="56.2" y1="58.5" x2="64.8" y2="50.5" stroke="#b5b5b5" stroke-width="1.2" stroke-dasharray="1.6 .6" opacity=".85"/><line x1="63.5" y1="58.5" x2="72.0" y2="50.5" stroke="#b5b5b5" stroke-width="1.2" stroke-dasharray="1.6 .6" opacity=".85"/><line x1="70.7" y1="58.5" x2="79.2" y2="50.5" stroke="#b5b5b5" stroke-width="1.2" stroke-dasharray="1.6 .6" opacity=".85"/><line x1="78.0" y1="58.5" x2="86.5" y2="50.5" stroke="#b5b5b5" stroke-width="1.2" stroke-dasharray="1.6 .6" opacity=".85"/><line x1="85.2" y1="58.5" x2="93.7" y2="50.5" stroke="#b5b5b5" stroke-width="1.2" stroke-dasharray="1.6 .6" opacity=".85"/><rect x="47" y="6" width="2.6" height="3" fill="#888" opacity=".7"/><rect x="50.4" y="6" width="2.6" height="3" fill="#888" opacity=".7"/></svg>
<svg class="a" style="left:916px;top:46px" width="100" height="60" viewBox="0 0 100 60"><defs><radialGradient id="dg" cx=".5" cy=".5" r=".6"><stop offset="0" stop-color="#575a55"/><stop offset=".8" stop-color="#4a4648"/><stop offset="1" stop-color="#2a2230"/></radialGradient></defs><rect width="100" height="60" fill="url(#dg)"/><line x1="11" x2="97" y1="10.4" y2="10.4" stroke="#6e6e6e" stroke-width=".7"/><line x1="11" x2="97" y1="13.8" y2="13.8" stroke="#6e6e6e" stroke-width=".7"/><line x1="11" x2="97" y1="16.9" y2="16.9" stroke="#6e6e6e" stroke-width=".7"/><line x1="11" x2="97" y1="20.2" y2="20.2" stroke="#6e6e6e" stroke-width=".7"/><line x1="11" x2="97" y1="23.6" y2="23.6" stroke="#6e6e6e" stroke-width=".7"/><line x1="11" x2="97" y1="26.9" y2="26.9" stroke="#6e6e6e" stroke-width=".7"/><line x1="11" x2="97" y1="30.2" y2="30.2" stroke="#6e6e6e" stroke-width=".7"/><line x1="11" x2="97" y1="33.6" y2="33.6" stroke="#6e6e6e" stroke-width=".7"/><line x1="11" x2="97" y1="36.9" y2="36.9" stroke="#6e6e6e" stroke-width=".7"/><line x1="11" x2="97" y1="40.2" y2="40.2" stroke="#6e6e6e" stroke-width=".7"/><line x1="11" x2="97" y1="43.6" y2="43.6" stroke="#6e6e6e" stroke-width=".7"/><line x1="11" x2="97" y1="46.9" y2="46.9" stroke="#6e6e6e" stroke-width=".7"/><path d="M13.6 15.2 L20.8 22.5 L28.1 22.5 L35.3 22.5 L42.5 26.6 L49.7 24.4 L56.9 21.9 L64.2 21.9 L71.4 21.9 L78.6 23.7 L85.8 27.8 L93.1 35.2" fill="none" stroke="#4e6fae" stroke-width="2"/><rect x="3.5" y="9.8" width="6" height="1.3" fill="#c8c8c8" opacity=".8"/><rect x="3.5" y="13.2" width="6" height="1.3" fill="#c8c8c8" opacity=".8"/><rect x="3.5" y="16.3" width="6" height="1.3" fill="#c8c8c8" opacity=".8"/><rect x="3.5" y="19.6" width="6" height="1.3" fill="#c8c8c8" opacity=".8"/><rect x="3.5" y="23.0" width="6" height="1.3" fill="#c8c8c8" opacity=".8"/><rect x="3.5" y="26.3" width="6" height="1.3" fill="#c8c8c8" opacity=".8"/><rect x="3.5" y="29.6" width="6" height="1.3" fill="#c8c8c8" opacity=".8"/><rect x="3.5" y="33.0" width="6" height="1.3" fill="#c8c8c8" opacity=".8"/><rect x="3.5" y="36.3" width="6" height="1.3" fill="#c8c8c8" opacity=".8"/><rect x="3.5" y="39.6" width="6" height="1.3" fill="#c8c8c8" opacity=".8"/><rect x="3.5" y="43.0" width="6" height="1.3" fill="#c8c8c8" opacity=".8"/><rect x="3.5" y="46.3" width="6" height="1.3" fill="#c8c8c8" opacity=".8"/><line x1="5.6" y1="58.5" x2="14.1" y2="50.5" stroke="#c8c8c8" stroke-width="1.2" stroke-dasharray="1.6 .6" opacity=".85"/><line x1="12.9" y1="58.5" x2="21.4" y2="50.5" stroke="#c8c8c8" stroke-width="1.2" stroke-dasharray="1.6 .6" opacity=".85"/><line x1="20.1" y1="58.5" x2="28.6" y2="50.5" stroke="#c8c8c8" stroke-width="1.2" stroke-dasharray="1.6 .6" opacity=".85"/><line x1="27.3" y1="58.5" x2="35.8" y2="50.5" stroke="#c8c8c8" stroke-width="1.2" stroke-dasharray="1.6 .6" opacity=".85"/><line x1="34.5" y1="58.5" x2="43.0" y2="50.5" stroke="#c8c8c8" stroke-width="1.2" stroke-dasharray="1.6 .6" opacity=".85"/><line x1="41.8" y1="58.5" x2="50.3" y2="50.5" stroke="#c8c8c8" stroke-width="1.2" stroke-dasharray="1.6 .6" opacity=".85"/><line x1="49.0" y1="58.5" x2="57.5" y2="50.5" stroke="#c8c8c8" stroke-width="1.2" stroke-dasharray="1.6 .6" opacity=".85"/><line x1="56.2" y1="58.5" x2="64.8" y2="50.5" stroke="#c8c8c8" stroke-width="1.2" stroke-dasharray="1.6 .6" opacity=".85"/><line x1="63.5" y1="58.5" x2="72.0" y2="50.5" stroke="#c8c8c8" stroke-width="1.2" stroke-dasharray="1.6 .6" opacity=".85"/><line x1="70.7" y1="58.5" x2="79.2" y2="50.5" stroke="#c8c8c8" stroke-width="1.2" stroke-dasharray="1.6 .6" opacity=".85"/><line x1="78.0" y1="58.5" x2="86.5" y2="50.5" stroke="#c8c8c8" stroke-width="1.2" stroke-dasharray="1.6 .6" opacity=".85"/><line x1="85.2" y1="58.5" x2="93.7" y2="50.5" stroke="#c8c8c8" stroke-width="1.2" stroke-dasharray="1.6 .6" opacity=".85"/><rect x="47" y="6" width="2.6" height="3" fill="#eee" opacity=".7"/><rect x="50.4" y="6" width="2.6" height="3" fill="#eee" opacity=".7"/></svg>
<svg class="a" style="left:1026px;top:46px" width="100" height="60" viewBox="0 0 100 60"><rect x=".5" y=".5" width="99" height="59" fill="#fff" stroke="#e3e3e3"/><line x1="6" x2="97" y1="45.6" y2="45.6" stroke="#d8d8d8" stroke-width=".9"/><path d="M6.9 15.2 L15.0 22.5 L23.1 22.5 L31.3 22.5 L39.4 26.6 L47.5 24.4 L55.6 21.9 L63.7 21.9 L71.9 21.9 L80.0 23.7 L88.1 27.8 L96.2 35.2" fill="none" stroke="#7ea6d8" stroke-width="1.4"/><line x1="2.6" y1="58.5" x2="11.1" y2="50.5" stroke="#b8b8b8" stroke-width="1.2" stroke-dasharray="1.6 .6" opacity=".85"/><line x1="10.1" y1="58.5" x2="18.6" y2="50.5" stroke="#b8b8b8" stroke-width="1.2" stroke-dasharray="1.6 .6" opacity=".85"/><line x1="17.5" y1="58.5" x2="26.0" y2="50.5" stroke="#b8b8b8" stroke-width="1.2" stroke-dasharray="1.6 .6" opacity=".85"/><line x1="24.9" y1="58.5" x2="33.4" y2="50.5" stroke="#b8b8b8" stroke-width="1.2" stroke-dasharray="1.6 .6" opacity=".85"/><line x1="32.4" y1="58.5" x2="40.9" y2="50.5" stroke="#b8b8b8" stroke-width="1.2" stroke-dasharray="1.6 .6" opacity=".85"/><line x1="39.8" y1="58.5" x2="48.3" y2="50.5" stroke="#b8b8b8" stroke-width="1.2" stroke-dasharray="1.6 .6" opacity=".85"/><line x1="47.3" y1="58.5" x2="55.8" y2="50.5" stroke="#b8b8b8" stroke-width="1.2" stroke-dasharray="1.6 .6" opacity=".85"/><line x1="54.7" y1="58.5" x2="63.2" y2="50.5" stroke="#b8b8b8" stroke-width="1.2" stroke-dasharray="1.6 .6" opacity=".85"/><line x1="62.2" y1="58.5" x2="70.7" y2="50.5" stroke="#b8b8b8" stroke-width="1.2" stroke-dasharray="1.6 .6" opacity=".85"/><line x1="69.6" y1="58.5" x2="78.1" y2="50.5" stroke="#b8b8b8" stroke-width="1.2" stroke-dasharray="1.6 .6" opacity=".85"/><line x1="77.0" y1="58.5" x2="85.5" y2="50.5" stroke="#b8b8b8" stroke-width="1.2" stroke-dasharray="1.6 .6" opacity=".85"/><line x1="84.5" y1="58.5" x2="93.0" y2="50.5" stroke="#b8b8b8" stroke-width="1.2" stroke-dasharray="1.6 .6" opacity=".85"/><rect x="47" y="6" width="2.6" height="3" fill="#ccc" opacity=".7"/><rect x="50.4" y="6" width="2.6" height="3" fill="#ccc" opacity=".7"/></svg>
<div class="a" style="left:1132px;top:39px;width:19px;height:26px;background:#f2f2f0;border:1px solid #c8c8c8"></div>
<svg class="a" style="left:1136px;top:47px" width="11" height="7" viewBox="0 0 11 7"><path d="M1 6l4.5-4.5L10 6" fill="none" stroke="#a8a8a8" stroke-width="1.2"/></svg>
<div class="a" style="left:1132px;top:65px;width:19px;height:24px;background:#f2f2f0;border:1px solid #7a7a7a"></div>
<svg class="a" style="left:1136px;top:74px" width="11" height="7" viewBox="0 0 11 7"><path d="M1 1l4.5 4.5L10 1" fill="none" stroke="#333" stroke-width="1.3"/></svg>
<div class="a" style="left:1132px;top:89px;width:19px;height:25px;background:#f2f2f0;border:1px solid #7a7a7a"></div>
<svg class="a" style="left:1136px;top:95px" width="11" height="11" viewBox="0 0 11 11"><path d="M1 1.5h9M1 5l4.5 4.5L10 5" fill="none" stroke="#333" stroke-width="1.3"/></svg>
<div class="t" style="left:645px;top:133px;font-size:15px;color:#444;">图表样式</div>
<svg class="a" style="left:1186px;top:37px" width="46" height="40" viewBox="1186 37 46 40">
<rect x="1193" y="45.4" width="34" height="26.7" fill="#fbfbfb"/>
<rect x="1193" y="45.4" width="34" height="8.9" fill="#7cb6e8"/>
<rect x="1193" y="54.3" width="11.4" height="17.8" fill="#7cb6e8"/>
<path d="M1193 45.4h34v26.7h-34z" fill="none" stroke="#555" stroke-width="1.4"/>
<path d="M1215.4 45.4v26.7M1204.4 63.2h22.6" stroke="#555" stroke-width="1.3"/>
<path d="M1204.4 52v20.1M1202 54.3h25M1193 63.2h11.4" stroke="#1f5fb5" stroke-width="1.3"/>
<polygon points="1186,37 1212,37 1212,43.6 1194.2,61 1186,61" fill="#f2f2f0"/>
<path d="M1195.5 57V44.4h12.6M1203 39.4l5.2 5-5.2 5M1190.6 52.2l4.9 4.9 4.9-4.9" fill="none" stroke="#444" stroke-width="1.3"/>
</svg>
<div class="t" style="left:1149.5px;top:84px;width:120px;text-align:center;font-size:15px;color:#444">切换行/列</div>
<svg class="a" style="left:1256px;top:40px" width="46" height="42" viewBox="1256 40 46 42">
<path d="M1260.5 45.4h34.5v26.9h-34.5z" fill="#fbfbfb"/>
<path d="M1260.5 45.4h23v17.8h-23z" fill="#7cb6e8"/>
<path d="M1283.5 54.2h11.5" stroke="#555" stroke-width="1.4"/>
<path d="M1283.5 45.4h11.5v15.4" fill="none" stroke="#555" stroke-width="1.4"/>
<path d="M1260.5 63.2v9.1h15.9M1272.3 63.2v9.1" fill="none" stroke="#555" stroke-width="1.4"/>
<path d="M1260.5 63.2V45.4h23v11.8M1260.5 54.2h23M1272.3 45.4v17.8M1260.5 63.2h22.2" fill="none" stroke="#1f5fb5" stroke-width="1.4"/>
<path d="M1276.8 66.8h6v-8.8h7.2v3.6h6v-3h3v20h-22.2z" fill="#f2f2f0" opacity="0"/>
<rect x="1278.4" y="68.3" width="5.7" height="10" fill="#c8c8c8" stroke="#505050" stroke-width="1.3"/>
<rect x="1284.1" y="59.5" width="7.4" height="18.8" fill="#fbfbfb" stroke="#505050" stroke-width="1.3"/>
<rect x="1291.5" y="63.1" width="6" height="15.2" fill="#7cb6e8" stroke="#1f5fb5" stroke-width="1.3"/>
</svg>
<div class="t" style="left:1218.0px;top:84px;width:120px;text-align:center;font-size:15px;color:#444">选择数据</div>
<div class="t" style="left:1226px;top:133px;font-size:15px;color:#444;">数据</div>
<svg class="a" style="left:1342px;top:38px" width="42" height="42" viewBox="1342 38 42 42">
<rect x="1347" y="55.5" width="10" height="20.5" fill="#c8c8c8" stroke="#555" stroke-width="1.4"/>
<rect x="1357.5" y="42" width="10" height="34" fill="#fbfbfb" stroke="#555" stroke-width="1.4"/>
<rect x="1368" y="48" width="9.5" height="28" fill="#7cb6e8" stroke="#1f5fb5" stroke-width="1.4"/>
</svg>
<div class="t" style="left:1303.0px;top:84px;width:120px;text-align:center;font-size:15px;color:#444">更改</div>
<div class="t" style="left:1303.0px;top:101px;width:120px;text-align:center;font-size:15px;color:#444">图表类型</div>
<div class="t" style="left:1348px;top:133px;font-size:15px;color:#444;">类型</div>
<svg class="a" style="left:1426px;top:38px" width="46" height="44" viewBox="1426 38 46 44">
<path d="M1430.9 43.3h34.1v25h-34.1z" fill="#fbfbfb"/>
<path d="M1430.9 51.7h34.1M1430.9 60.8h21.6" stroke="#8a8a8a" stroke-width="1.4"/>
<path d="M1442.3 43.3v25M1453.5 43.3v13.8" stroke="#555" stroke-width="1.4"/>
<path d="M1430.9 68.2V43.3h34.1v17.2" fill="none" stroke="#505050" stroke-width="1.4"/>
<path d="M1430.9 68.2v5.2h9.5l5.7-5.2z" fill="#fbfbfb" stroke="#505050" stroke-width="1.3" stroke-linejoin="miter"/>
<path d="M1430.9 68.2h15.5" stroke="#505050" stroke-width="1.4"/>
<rect x="1448.4" y="68.3" width="5.7" height="10" fill="#c8c8c8" stroke="#505050" stroke-width="1.3"/>
<rect x="1454.1" y="59.5" width="7.4" height="18.8" fill="#fbfbfb" stroke="#505050" stroke-width="1.3"/>
<rect x="1461.5" y="63.1" width="6" height="15.2" fill="#7cb6e8" stroke="#1f5fb5" stroke-width="1.3"/>
</svg>
<div class="t" style="left:1388.0px;top:84px;width:120px;text-align:center;font-size:15px;color:#444">移动图表</div>
<div class="t" style="left:1432px;top:133px;font-size:15px;color:#444;">位置</div>
<div class="a" style="left:36px;top:154px;width:1566px;height:83px;background:#e6e6e6"></div>
<div class="a" style="left:42px;top:166px;width:127px;height:32px;background:#fff;border:1px solid #c6c6c6"></div>
<div class="t" style="left:49px;top:173px;font-size:17px;color:#333;">图表 2</div>
<svg class="a" style="left:153px;top:179px" width="9" height="6" viewBox="0 0 9 6"><path d="M0.5 0.5h8L4.5 5z" fill="#666"/></svg>
<div class="a" style="left:186px;top:175px;width:3px;height:3px;background:#a8a8a8"></div>
<div class="a" style="left:186px;top:181px;width:3px;height:3px;background:#a8a8a8"></div>
<div class="a" style="left:186px;top:187px;width:3px;height:3px;background:#a8a8a8"></div>
<div class="a" style="left:206px;top:166px;width:137px;height:32px;background:#fff;border:1px solid #c6c6c6"></div>
<svg class="a" style="left:220px;top:174px" width="18" height="16" viewBox="0 0 18 16"><path d="M2 1.5l13 13M15 1.5l-13 13" stroke="#bdbdbd" stroke-width="1.6"/></svg>
<svg class="a" style="left:265px;top:174px" width="19" height="16" viewBox="0 0 19 16"><path d="M1.5 8.5l5 5.5 11-12" fill="none" stroke="#c8c8c8" stroke-width="2"/></svg>
<div class="t" style="left:310px;top:171px;font-size:19px;color:#555;font-family:'Liberation Serif',serif;font-style:italic">f<span style="font-size:16px">x</span></div>
<div class="a" style="left:346px;top:166px;width:1260px;height:58px;background:#fff;border:1px solid #c6c6c6"></div>
<div class="t" style="left:360px;top:175px;font-size:15.7px;color:#3a3a3a;">=SERIES(Sheet1!$B$1,Sheet1!$A$2:$A$13,Sheet1!$B$2:$B$13,1)</div>
<div class="a" style="left:36px;top:237px;width:1566px;height:23px;background:#e6e6e6;border-bottom:1px solid #ababab"></div>
<div class="a" style="left:36px;top:260px;width:34px;height:486px;background:#e6e6e6;border-right:1px solid #ababab"></div>
<div class="a" style="left:70px;top:283px;width:1532px;height:1px;background:#d9d9d9"></div>
<div class="a" style="left:36px;top:283px;width:33px;height:1px;background:#bdbdbd"></div>
<div class="a" style="left:70px;top:307px;width:1532px;height:1px;background:#d9d9d9"></div>
<div class="a" style="left:36px;top:307px;width:33px;height:1px;background:#bdbdbd"></div>
<div class="a" style="left:70px;top:331px;width:1532px;height:1px;background:#d9d9d9"></div>
<div class="a" style="left:36px;top:331px;width:33px;height:1px;background:#bdbdbd"></div>
<div class="a" style="left:70px;top:355px;width:1532px;height:1px;background:#d9d9d9"></div>
<div class="a" style="left:36px;top:355px;width:33px;height:1px;background:#bdbdbd"></div>
<div class="a" style="left:70px;top:379px;width:1532px;height:1px;background:#d9d9d9"></div>
<div class="a" style="left:36px;top:379px;width:33px;height:1px;background:#bdbdbd"></div>
<div class="a" style="left:70px;top:403px;width:1532px;height:1px;background:#d9d9d9"></div>
<div class="a" style="left:36px;top:403px;width:33px;height:1px;background:#bdbdbd"></div>
<div class="a" style="left:70px;top:427px;width:1532px;height:1px;background:#d9d9d9"></div>
<div class="a" style="left:36px;top:427px;width:33px;height:1px;background:#bdbdbd"></div>
<div class="a" style="left:70px;top:451px;width:1532px;height:1px;background:#d9d9d9"></div>
<div class="a" style="left:36px;top:451px;width:33px;height:1px;background:#bdbdbd"></div>
<div class="a" style="left:70px;top:475px;width:1532px;height:1px;background:#d9d9d9"></div>
<div class="a" style="left:36px;top:475px;width:33px;height:1px;background:#bdbdbd"></div>
<div class="a" style="left:70px;top:499px;width:1532px;height:1px;background:#d9d9d9"></div>
<div class="a" style="left:36px;top:499px;width:33px;height:1px;background:#bdbdbd"></div>
<div class="a" style="left:70px;top:523px;width:1532px;height:1px;background:#d9d9d9"></div>
<div class="a" style="left:36px;top:523px;width:33px;height:1px;background:#bdbdbd"></div>
<div class="a" style="left:70px;top:547px;width:1532px;height:1px;background:#d9d9d9"></div>
<div class="a" style="left:36px;top:547px;width:33px;height:1px;background:#bdbdbd"></div>
<div class="a" style="left:70px;top:571px;width:1532px;height:1px;background:#d9d9d9"></div>
<div class="a" style="left:36px;top:571px;width:33px;height:1px;background:#bdbdbd"></div>
<div class="a" style="left:70px;top:595px;width:1532px;height:1px;background:#d9d9d9"></div>
<div class="a" style="left:36px;top:595px;width:33px;height:1px;background:#bdbdbd"></div>
<div class="a" style="left:70px;top:619px;width:1532px;height:1px;background:#d9d9d9"></div>
<div class="a" style="left:36px;top:619px;width:33px;height:1px;background:#bdbdbd"></div>
<div class="a" style="left:70px;top:643px;width:1532px;height:1px;background:#d9d9d9"></div>
<div class="a" style="left:36px;top:643px;width:33px;height:1px;background:#bdbdbd"></div>
<div class="a" style="left:70px;top:667px;width:1532px;height:1px;background:#d9d9d9"></div>
<div class="a" style="left:36px;top:667px;width:33px;height:1px;background:#bdbdbd"></div>
<div class="a" style="left:70px;top:691px;width:1532px;height:1px;background:#d9d9d9"></div>
<div class="a" style="left:36px;top:691px;width:33px;height:1px;background:#bdbdbd"></div>
<div class="a" style="left:70px;top:715px;width:1532px;height:1px;background:#d9d9d9"></div>
<div class="a" style="left:36px;top:715px;width:33px;height:1px;background:#bdbdbd"></div>
<div class="a" style="left:70px;top:739px;width:1532px;height:1px;background:#d9d9d9"></div>
<div class="a" style="left:36px;top:739px;width:33px;height:1px;background:#bdbdbd"></div>
<div class="a" style="left:70px;top:763px;width:1532px;height:1px;background:#d9d9d9"></div>
<div class="a" style="left:36px;top:763px;width:33px;height:1px;background:#bdbdbd"></div>
<div class="a" style="left:164px;top:260px;width:1px;height:486px;background:#d9d9d9"></div>
<div class="a" style="left:164px;top:237px;width:1px;height:22px;background:#c0c0c0"></div>
<div class="a" style="left:244px;top:260px;width:1px;height:486px;background:#d9d9d9"></div>
<div class="a" style="left:244px;top:237px;width:1px;height:22px;background:#c0c0c0"></div>
<div class="a" style="left:324px;top:260px;width:1px;height:486px;background:#d9d9d9"></div>
<div class="a" style="left:324px;top:237px;width:1px;height:22px;background:#c0c0c0"></div>
<div class="a" style="left:404px;top:260px;width:1px;height:486px;background:#d9d9d9"></div>
<div class="a" style="left:404px;top:237px;width:1px;height:22px;background:#c0c0c0"></div>
<div class="a" style="left:484px;top:260px;width:1px;height:486px;background:#d9d9d9"></div>
<div class="a" style="left:484px;top:237px;width:1px;height:22px;background:#c0c0c0"></div>
<div class="a" style="left:564px;top:260px;width:1px;height:486px;background:#d9d9d9"></div>
<div class="a" style="left:564px;top:237px;width:1px;height:22px;background:#c0c0c0"></div>
<div class="a" style="left:644px;top:260px;width:1px;height:486px;background:#d9d9d9"></div>
<div class="a" style="left:644px;top:237px;width:1px;height:22px;background:#c0c0c0"></div>
<div class="a" style="left:724px;top:260px;width:1px;height:486px;background:#d9d9d9"></div>
<div class="a" style="left:724px;top:237px;width:1px;height:22px;background:#c0c0c0"></div>
<div class="a" style="left:804px;top:260px;width:1px;height:486px;background:#d9d9d9"></div>
<div class="a" style="left:804px;top:237px;width:1px;height:22px;background:#c0c0c0"></div>
<div class="a" style="left:884px;top:260px;width:1px;height:486px;background:#d9d9d9"></div>
<div class="a" style="left:884px;top:237px;width:1px;height:22px;background:#c0c0c0"></div>
<div class="a" style="left:964px;top:260px;width:1px;height:486px;background:#d9d9d9"></div>
<div class="a" style="left:964px;top:237px;width:1px;height:22px;background:#c0c0c0"></div>
<div class="a" style="left:1044px;top:260px;width:1px;height:486px;background:#d9d9d9"></div>
<div class="a" style="left:1044px;top:237px;width:1px;height:22px;background:#c0c0c0"></div>
<div class="a" style="left:1124px;top:260px;width:1px;height:486px;background:#d9d9d9"></div>
<div class="a" style="left:1124px;top:237px;width:1px;height:22px;background:#c0c0c0"></div>
<div class="a" style="left:1204px;top:260px;width:1px;height:486px;background:#d9d9d9"></div>
<div class="a" style="left:1204px;top:237px;width:1px;height:22px;background:#c0c0c0"></div>
<div class="a" style="left:1284px;top:260px;width:1px;height:486px;background:#d9d9d9"></div>
<div class="a" style="left:1284px;top:237px;width:1px;height:22px;background:#c0c0c0"></div>
<div class="a" style="left:1364px;top:260px;width:1px;height:486px;background:#d9d9d9"></div>
<div class="a" style="left:1364px;top:237px;width:1px;height:22px;background:#c0c0c0"></div>
<div class="a" style="left:1444px;top:260px;width:1px;height:486px;background:#d9d9d9"></div>
<div class="a" style="left:1444px;top:237px;width:1px;height:22px;background:#c0c0c0"></div>
<div class="a" style="left:1524px;top:260px;width:1px;height:486px;background:#d9d9d9"></div>
<div class="a" style="left:1524px;top:237px;width:1px;height:22px;background:#c0c0c0"></div>
<div class="a" style="left:69px;top:237px;width:1px;height:22px;background:#c0c0c0"></div>
<svg class="a" style="left:50px;top:240px" width="17" height="17" viewBox="0 0 17 17"><path d="M16 1v15H1z" fill="#b4b4b4"/></svg>
<div class="t serif" style="left:70px;top:240.5px;width:95px;text-align:center;font-size:18.5px;color:#222;transform:scaleX(.72)">A</div>
<div class="t serif" style="left:165px;top:240.5px;width:80px;text-align:center;font-size:18.5px;color:#222;transform:scaleX(.72)">B</div>
<div class="t serif" style="left:245px;top:240.5px;width:80px;text-align:center;font-size:18.5px;color:#222;transform:scaleX(.72)">C</div>
<div class="t serif" style="left:325px;top:240.5px;width:80px;text-align:center;font-size:18.5px;color:#222;transform:scaleX(.72)">D</div>
<div class="t serif" style="left:405px;top:240.5px;width:80px;text-align:center;font-size:18.5px;color:#222;transform:scaleX(.72)">E</div>
<div class="t serif" style="left:485px;top:240.5px;width:80px;text-align:center;font-size:18.5px;color:#222;transform:scaleX(.72)">F</div>
<div class="t serif" style="left:565px;top:240.5px;width:80px;text-align:center;font-size:18.5px;color:#222;transform:scaleX(.72)">G</div>
<div class="t serif" style="left:645px;top:240.5px;width:80px;text-align:center;font-size:18.5px;color:#222;transform:scaleX(.72)">H</div>
<div class="t serif" style="left:725px;top:240.5px;width:80px;text-align:center;font-size:18.5px;color:#222;transform:scaleX(.72)">I</div>
<div class="t serif" style="left:805px;top:240.5px;width:80px;text-align:center;font-size:18.5px;color:#222;transform:scaleX(.72)">J</div>
<div class="t serif" style="left:885px;top:240.5px;width:80px;text-align:center;font-size:18.5px;color:#222;transform:scaleX(.72)">K</div>
<div class="t serif" style="left:965px;top:240.5px;width:80px;text-align:center;font-size:18.5px;color:#222;transform:scaleX(.72)">L</div>
<div class="t serif" style="left:1045px;top:240.5px;width:80px;text-align:center;font-size:18.5px;color:#222;transform:scaleX(.72)">M</div>
<div class="t serif" style="left:1125px;top:240.5px;width:80px;text-align:center;font-size:18.5px;color:#222;transform:scaleX(.72)">N</div>
<div class="t serif" style="left:1205px;top:240.5px;width:80px;text-align:center;font-size:18.5px;color:#222;transform:scaleX(.72)">O</div>
<div class="t serif" style="left:1285px;top:240.5px;width:80px;text-align:center;font-size:18.5px;color:#222;transform:scaleX(.72)">P</div>
<div class="t serif" style="left:1365px;top:240.5px;width:80px;text-align:center;font-size:18.5px;color:#222;transform:scaleX(.72)">Q</div>
<div class="t serif" style="left:1445px;top:240.5px;width:80px;text-align:center;font-size:18.5px;color:#222;transform:scaleX(.72)">R</div>
<div class="t serif" style="left:1525px;top:240.5px;width:80px;text-align:center;font-size:18.5px;color:#222;transform:scaleX(.72)">S</div>
<div class="t serif" style="left:36px;top:264px;width:33px;text-align:center;font-size:18px;color:#222">1</div>
<div class="t serif" style="left:36px;top:288px;width:33px;text-align:center;font-size:18px;color:#222">2</div>
<div class="t serif" style="left:36px;top:312px;width:33px;text-align:center;font-size:18px;color:#222">3</div>
<div class="t serif" style="left:36px;top:336px;width:33px;text-align:center;font-size:18px;color:#222">4</div>
<div class="t serif" style="left:36px;top:360px;width:33px;text-align:center;font-size:18px;color:#222">5</div>
<div class="t serif" style="left:36px;top:384px;width:33px;text-align:center;font-size:18px;color:#222">6</div>
<div class="t serif" style="left:36px;top:408px;width:33px;text-align:center;font-size:18px;color:#222">7</div>
<div class="t serif" style="left:36px;top:432px;width:33px;text-align:center;font-size:18px;color:#222">8</div>
<div class="t serif" style="left:36px;top:456px;width:33px;text-align:center;font-size:18px;color:#222">9</div>
<div class="t serif" style="left:36px;top:480px;width:33px;text-align:center;font-size:18px;color:#222">10</div>
<div class="t serif" style="left:36px;top:504px;width:33px;text-align:center;font-size:18px;color:#222">11</div>
<div class="t serif" style="left:36px;top:528px;width:33px;text-align:center;font-size:18px;color:#222">12</div>
<div class="t serif" style="left:36px;top:552px;width:33px;text-align:center;font-size:18px;color:#222">13</div>
<div class="t serif" style="left:36px;top:576px;width:33px;text-align:center;font-size:18px;color:#222">14</div>
<div class="t serif" style="left:36px;top:600px;width:33px;text-align:center;font-size:18px;color:#222">15</div>
<div class="t serif" style="left:36px;top:624px;width:33px;text-align:center;font-size:18px;color:#222">16</div>
<div class="t serif" style="left:36px;top:648px;width:33px;text-align:center;font-size:18px;color:#222">17</div>
<div class="t serif" style="left:36px;top:672px;width:33px;text-align:center;font-size:18px;color:#222">18</div>
<div class="t serif" style="left:36px;top:696px;width:33px;text-align:center;font-size:18px;color:#222">19</div>
<div class="t serif" style="left:36px;top:720px;width:33px;text-align:center;font-size:18px;color:#222">20</div>
<div class="a" style="left:70px;top:260px;width:94px;height:23px;background:#b7dee8"></div>
<div class="a" style="left:165px;top:260px;width:79px;height:23px;background:#b9cbd9"></div>
<div class="a" style="left:70px;top:284px;width:94px;height:287px;background:#f0ebf8"></div>
<div class="a" style="left:165px;top:284px;width:79px;height:287px;background:#e9eff9"></div>
<div class="a" style="left:70px;top:307px;width:94px;height:1px;background:#d6d0de"></div>
<div class="a" style="left:165px;top:307px;width:79px;height:1px;background:#d0d6de"></div>
<div class="a" style="left:70px;top:331px;width:94px;height:1px;background:#d6d0de"></div>
<div class="a" style="left:165px;top:331px;width:79px;height:1px;background:#d0d6de"></div>
<div class="a" style="left:70px;top:355px;width:94px;height:1px;background:#d6d0de"></div>
<div class="a" style="left:165px;top:355px;width:79px;height:1px;background:#d0d6de"></div>
<div class="a" style="left:70px;top:379px;width:94px;height:1px;background:#d6d0de"></div>
<div class="a" style="left:165px;top:379px;width:79px;height:1px;background:#d0d6de"></div>
<div class="a" style="left:70px;top:403px;width:94px;height:1px;background:#d6d0de"></div>
<div class="a" style="left:165px;top:403px;width:79px;height:1px;background:#d0d6de"></div>
<div class="a" style="left:70px;top:427px;width:94px;height:1px;background:#d6d0de"></div>
<div class="a" style="left:165px;top:427px;width:79px;height:1px;background:#d0d6de"></div>
<div class="a" style="left:70px;top:451px;width:94px;height:1px;background:#d6d0de"></div>
<div class="a" style="left:165px;top:451px;width:79px;height:1px;background:#d0d6de"></div>
<div class="a" style="left:70px;top:475px;width:94px;height:1px;background:#d6d0de"></div>
<div class="a" style="left:165px;top:475px;width:79px;height:1px;background:#d0d6de"></div>
<div class="a" style="left:70px;top:499px;width:94px;height:1px;background:#d6d0de"></div>
<div class="a" style="left:165px;top:499px;width:79px;height:1px;background:#d0d6de"></div>
<div class="a" style="left:70px;top:523px;width:94px;height:1px;background:#d6d0de"></div>
<div class="a" style="left:165px;top:523px;width:79px;height:1px;background:#d0d6de"></div>
<div class="a" style="left:70px;top:547px;width:94px;height:1px;background:#d6d0de"></div>
<div class="a" style="left:165px;top:547px;width:79px;height:1px;background:#d0d6de"></div>
<div class="t" style="left:70px;top:264px;width:94px;text-align:center;font-size:17px;color:#222">月份</div>
<div class="t" style="left:165px;top:264px;width:79px;text-align:center;font-size:17px;color:#222">单价</div>
<div class="t serif" style="left:70px;top:289px;width:91px;text-align:right;font-size:17.5px;color:#222">2020<span style="position:relative;top:-2.5px">–</span>12<span style="position:relative;top:-2.5px">–</span>1</div>
<div class="t serif" style="left:165px;top:289px;width:79px;text-align:center;font-size:17.5px;color:#222">15153</div>
<div class="t serif" style="left:70px;top:313px;width:91px;text-align:right;font-size:17.5px;color:#222">2020<span style="position:relative;top:-2.5px">–</span>11<span style="position:relative;top:-2.5px">–</span>1</div>
<div class="t serif" style="left:165px;top:313px;width:79px;text-align:center;font-size:17.5px;color:#222">15375</div>
<div class="t serif" style="left:70px;top:337px;width:91px;text-align:right;font-size:17.5px;color:#222">2020<span style="position:relative;top:-2.5px">–</span>10<span style="position:relative;top:-2.5px">–</span>1</div>
<div class="t serif" style="left:165px;top:337px;width:79px;text-align:center;font-size:17.5px;color:#222">15500</div>
<div class="t serif" style="left:70px;top:361px;width:91px;text-align:right;font-size:17.5px;color:#222">2020<span style="position:relative;top:-2.5px">–</span>9<span style="position:relative;top:-2.5px">–</span>1</div>
<div class="t serif" style="left:165px;top:361px;width:79px;text-align:center;font-size:17.5px;color:#222">15555</div>
<div class="t serif" style="left:70px;top:385px;width:91px;text-align:right;font-size:17.5px;color:#222">2020<span style="position:relative;top:-2.5px">–</span>8<span style="position:relative;top:-2.5px">–</span>1</div>
<div class="t serif" style="left:165px;top:385px;width:79px;text-align:center;font-size:17.5px;color:#222">15555</div>
<div class="t serif" style="left:70px;top:409px;width:91px;text-align:right;font-size:17.5px;color:#222">2020<span style="position:relative;top:-2.5px">–</span>7<span style="position:relative;top:-2.5px">–</span>1</div>
<div class="t serif" style="left:165px;top:409px;width:79px;text-align:center;font-size:17.5px;color:#222">15555</div>
<div class="t serif" style="left:70px;top:433px;width:91px;text-align:right;font-size:17.5px;color:#222">2020<span style="position:relative;top:-2.5px">–</span>6<span style="position:relative;top:-2.5px">–</span>1</div>
<div class="t serif" style="left:165px;top:433px;width:79px;text-align:center;font-size:17.5px;color:#222">15477</div>
<div class="t serif" style="left:70px;top:457px;width:91px;text-align:right;font-size:17.5px;color:#222">2020<span style="position:relative;top:-2.5px">–</span>5<span style="position:relative;top:-2.5px">–</span>1</div>
<div class="t serif" style="left:165px;top:457px;width:79px;text-align:center;font-size:17.5px;color:#222">15412</div>
<div class="t serif" style="left:70px;top:481px;width:91px;text-align:right;font-size:17.5px;color:#222">2020<span style="position:relative;top:-2.5px">–</span>4<span style="position:relative;top:-2.5px">–</span>1</div>
<div class="t serif" style="left:165px;top:481px;width:79px;text-align:center;font-size:17.5px;color:#222">15537</div>
<div class="t serif" style="left:70px;top:505px;width:91px;text-align:right;font-size:17.5px;color:#222">2020<span style="position:relative;top:-2.5px">–</span>3<span style="position:relative;top:-2.5px">–</span>1</div>
<div class="t serif" style="left:165px;top:505px;width:79px;text-align:center;font-size:17.5px;color:#222">15537</div>
<div class="t serif" style="left:70px;top:529px;width:91px;text-align:right;font-size:17.5px;color:#222">2020<span style="position:relative;top:-2.5px">–</span>2<span style="position:relative;top:-2.5px">–</span>1</div>
<div class="t serif" style="left:165px;top:529px;width:79px;text-align:center;font-size:17.5px;color:#222">15537</div>
<div class="t serif" style="left:70px;top:553px;width:91px;text-align:right;font-size:17.5px;color:#222">2020<span style="position:relative;top:-2.5px">–</span>1<span style="position:relative;top:-2.5px">–</span>1</div>
<div class="t serif" style="left:165px;top:553px;width:79px;text-align:center;font-size:17.5px;color:#222">15757</div>
<div class="t" style="left:327px;top:264.5px;font-size:17.5px;color:#222">注</div>
<div class="t" style="left:340px;top:264.5px;font-size:17.5px;color:#222">：</div>
<div class="t" style="left:364px;top:264.5px;font-size:17.5px;color:#222">单位</div>
<div class="t" style="left:409px;top:264.5px;font-size:17.5px;color:#222">元</div>
<div class="t" style="left:436px;top:264.5px;font-size:17.5px;color:#222">平米</div>
<div class="t serif" style="left:426.5px;top:262.5px;font-size:20px;color:#222">/</div>
<div class="a" style="left:163px;top:284px;width:1px;height:287px;background:#fff"></div>
<div class="a" style="left:243px;top:284px;width:1px;height:287px;background:#fff"></div>
<div class="a" style="left:163px;top:260px;width:2px;height:23px;background:#5a3030"></div>
<div class="a" style="left:243px;top:260px;width:2px;height:23px;background:#5a3030"></div>
<div class="a" style="left:162px;top:259px;width:5px;height:3px;background:#5a3030"></div>
<div class="a" style="left:242px;top:259px;width:5px;height:3px;background:#5a3030"></div>
<div class="a" style="left:70px;top:282px;width:94px;height:2px;background:#7e57c2"></div>
<div class="a" style="left:70px;top:571px;width:94px;height:2px;background:#7e57c2"></div>
<div class="a" style="left:164px;top:284px;width:2px;height:287px;background:#7e57c2"></div>
<div class="a" style="left:166px;top:282px;width:78px;height:2px;background:#2b6cc4"></div>
<div class="a" style="left:166px;top:571px;width:78px;height:2px;background:#2b6cc4"></div>
<div class="a" style="left:244px;top:284px;width:2px;height:287px;background:#2b6cc4"></div>
<div class="a" style="left:162px;top:281px;width:5px;height:5px;background:#7e57c2;outline:1px solid #fff"></div>
<div class="a" style="left:242px;top:281px;width:5px;height:5px;background:#2b6cc4;outline:1px solid #fff"></div>
<div class="a" style="left:162px;top:569px;width:5px;height:5px;background:#7e57c2;outline:1px solid #fff"></div>
<div class="a" style="left:242px;top:569px;width:5px;height:5px;background:#2b6cc4;outline:1px solid #fff"></div>
<div class="a" style="left:70px;top:281px;width:2px;height:5px;background:#7e57c2"></div>
<div class="a" style="left:70px;top:569px;width:2px;height:5px;background:#7e57c2"></div>
<svg class="a" style="left:0;top:0" width="1602" height="802" viewBox="0 0 1602 802"><rect x="540.75" y="322.75" width="599.75" height="359.75" fill="#fff" stroke="#595959" stroke-width="1.5"/><line x1="601" x2="1121" y1="385.5" y2="385.5" stroke="#d9d9d9" stroke-width="1"/><text x="587" y="389.0" text-anchor="end" font-size="13" fill="#595959" font-family="Liberation Sans">15900</text><line x1="601" x2="1121" y1="405.5" y2="405.5" stroke="#d9d9d9" stroke-width="1"/><text x="587" y="409.0" text-anchor="end" font-size="13" fill="#595959" font-family="Liberation Sans">15800</text><line x1="601" x2="1121" y1="424.5" y2="424.5" stroke="#d9d9d9" stroke-width="1"/><text x="587" y="428.0" text-anchor="end" font-size="13" fill="#595959" font-family="Liberation Sans">15700</text><line x1="601" x2="1121" y1="444.5" y2="444.5" stroke="#d9d9d9" stroke-width="1"/><text x="587" y="448.0" text-anchor="end" font-size="13" fill="#595959" font-family="Liberation Sans">15600</text><line x1="601" x2="1121" y1="464.5" y2="464.5" stroke="#d9d9d9" stroke-width="1"/><text x="587" y="468.0" text-anchor="end" font-size="13" fill="#595959" font-family="Liberation Sans">15500</text><line x1="601" x2="1121" y1="484.5" y2="484.5" stroke="#d9d9d9" stroke-width="1"/><text x="587" y="488.0" text-anchor="end" font-size="13" fill="#595959" font-family="Liberation Sans">15400</text><line x1="601" x2="1121" y1="504.5" y2="504.5" stroke="#d9d9d9" stroke-width="1"/><text x="587" y="508.0" text-anchor="end" font-size="13" fill="#595959" font-family="Liberation Sans">15300</text><line x1="601" x2="1121" y1="524.5" y2="524.5" stroke="#d9d9d9" stroke-width="1"/><text x="587" y="528.0" text-anchor="end" font-size="13" fill="#595959" font-family="Liberation Sans">15200</text><line x1="601" x2="1121" y1="544.5" y2="544.5" stroke="#d9d9d9" stroke-width="1"/><text x="587" y="548.0" text-anchor="end" font-size="13" fill="#595959" font-family="Liberation Sans">15100</text><line x1="601" x2="1121" y1="564.5" y2="564.5" stroke="#d9d9d9" stroke-width="1"/><text x="587" y="568.0" text-anchor="end" font-size="13" fill="#595959" font-family="Liberation Sans">15000</text><line x1="601" x2="1121" y1="584.5" y2="584.5" stroke="#d9d9d9" stroke-width="1"/><text x="587" y="588.0" text-anchor="end" font-size="13" fill="#595959" font-family="Liberation Sans">14900</text><line x1="601" x2="1121" y1="604.5" y2="604.5" stroke="#d9d9d9" stroke-width="1"/><text x="587" y="608.0" text-anchor="end" font-size="13" fill="#595959" font-family="Liberation Sans">14800</text><line x1="601.5" x2="601.5" y1="604" y2="608" stroke="#d9d9d9"/><line x1="644.5" x2="644.5" y1="604" y2="608" stroke="#d9d9d9"/><line x1="688.5" x2="688.5" y1="604" y2="608" stroke="#d9d9d9"/><line x1="731.5" x2="731.5" y1="604" y2="608" stroke="#d9d9d9"/><line x1="774.5" x2="774.5" y1="604" y2="608" stroke="#d9d9d9"/><line x1="818.5" x2="818.5" y1="604" y2="608" stroke="#d9d9d9"/><line x1="861.5" x2="861.5" y1="604" y2="608" stroke="#d9d9d9"/><line x1="904.5" x2="904.5" y1="604" y2="608" stroke="#d9d9d9"/><line x1="948.5" x2="948.5" y1="604" y2="608" stroke="#d9d9d9"/><line x1="991.5" x2="991.5" y1="604" y2="608" stroke="#d9d9d9"/><line x1="1034.5" x2="1034.5" y1="604" y2="608" stroke="#d9d9d9"/><line x1="1078.5" x2="1078.5" y1="604" y2="608" stroke="#d9d9d9"/><line x1="1121.5" x2="1121.5" y1="604" y2="608" stroke="#d9d9d9"/><text transform="translate(625.7 624) rotate(-45)" text-anchor="end" font-size="13.6" fill="#595959" font-family="Liberation Sans">2020-1-1</text><text transform="translate(669.0 624) rotate(-45)" text-anchor="end" font-size="13.6" fill="#595959" font-family="Liberation Sans">2020-2-1</text><text transform="translate(712.3 624) rotate(-45)" text-anchor="end" font-size="13.6" fill="#595959" font-family="Liberation Sans">2020-3-1</text><text transform="translate(755.7 624) rotate(-45)" text-anchor="end" font-size="13.6" fill="#595959" font-family="Liberation Sans">2020-4-1</text><text transform="translate(799.0 624) rotate(-45)" text-anchor="end" font-size="13.6" fill="#595959" font-family="Liberation Sans">2020-5-1</text><text transform="translate(842.3 624) rotate(-45)" text-anchor="end" font-size="13.6" fill="#595959" font-family="Liberation Sans">2020-6-1</text><text transform="translate(885.7 624) rotate(-45)" text-anchor="end" font-size="13.6" fill="#595959" font-family="Liberation Sans">2020-7-1</text><text transform="translate(929.0 624) rotate(-45)" text-anchor="end" font-size="13.6" fill="#595959" font-family="Liberation Sans">2020-8-1</text><text transform="translate(972.3 624) rotate(-45)" text-anchor="end" font-size="13.6" fill="#595959" font-family="Liberation Sans">2020-9-1</text><text transform="translate(1015.7 624) rotate(-45)" text-anchor="end" font-size="13.6" fill="#595959" font-family="Liberation Sans">2020-10-1</text><text transform="translate(1059.0 624) rotate(-45)" text-anchor="end" font-size="13.6" fill="#595959" font-family="Liberation Sans">2020-11-1</text><text transform="translate(1102.3 624) rotate(-45)" text-anchor="end" font-size="13.6" fill="#595959" font-family="Liberation Sans">2020-12-1</text><text x="840" y="358.5" text-anchor="middle" font-size="22" letter-spacing="1" fill="#666" font-family="Liberation Sans">单价</text><path d="M622.7 414.0 C629.9 421.3 651.6 450.4 666.0 457.7 C680.4 465.0 694.9 457.7 709.3 457.7 C723.8 457.7 738.2 453.6 752.7 457.7 C767.1 461.9 781.6 480.6 796.0 482.6 C810.4 484.6 824.9 474.4 839.3 469.7 C853.8 464.9 868.2 456.7 882.7 454.2 C897.1 451.6 911.6 454.2 926.0 454.2 C940.4 454.2 954.9 452.3 969.3 454.2 C983.8 456.0 998.2 459.1 1012.7 465.1 C1027.1 471.1 1041.6 478.5 1056.0 490.0 C1070.4 501.5 1092.1 526.8 1099.3 534.2" fill="none" stroke="#4a7ebb" stroke-width="4" stroke-linecap="round"/><circle cx="541.0" cy="323" r="6" fill="#fff" stroke="#595959" stroke-width="2"/><circle cx="841.0" cy="323" r="6" fill="#fff" stroke="#595959" stroke-width="2"/><circle cx="1140.5" cy="323" r="6" fill="#fff" stroke="#595959" stroke-width="2"/><circle cx="541.0" cy="503" r="6" fill="#fff" stroke="#595959" stroke-width="2"/><circle cx="1140.5" cy="503" r="6" fill="#fff" stroke="#595959" stroke-width="2"/><circle cx="541.0" cy="683" r="6" fill="#fff" stroke="#595959" stroke-width="2"/><circle cx="841.0" cy="683" r="6" fill="#fff" stroke="#595959" stroke-width="2"/><circle cx="1140.5" cy="683" r="6" fill="#fff" stroke="#595959" stroke-width="2"/></svg>
<div class="a" style="left:36px;top:745px;width:1566px;height:30px;background:#e6e6e6;border-top:1px solid #ababab;border-bottom:1px solid #c8c8c8"></div>
<svg class="a" style="left:62px;top:754px" width="40" height="12" viewBox="0 0 40 12"><path d="M7 1v10L2 6z" fill="#c2c2c2"/><path d="M31 1v10l5-5z" fill="#c2c2c2"/></svg>
<div class="a" style="left:139px;top:745px;width:82px;height:27px;background:#fff;border-left:1px solid #ababab;border-right:1px solid #ababab;border-bottom:2px solid #1e7145"></div>
<div class="t" style="left:152.5px;top:746.5px;font-size:18px;color:#1e7145">Sheet1</div>
<svg class="a" style="left:253px;top:750px" width="22" height="22" viewBox="0 0 22 22"><circle cx="11" cy="10" r="9.3" fill="none" stroke="#777" stroke-width="1.4"/><path d="M6.5 10h9M11 5.5v9" stroke="#555" stroke-width="1.6"/></svg>
<div class="a" style="left:993px;top:752px;width:3px;height:3px;background:#b0b0b0"></div>
<div class="a" style="left:993px;top:758px;width:3px;height:3px;background:#b0b0b0"></div>
<div class="a" style="left:993px;top:764px;width:3px;height:3px;background:#b0b0b0"></div>
<div class="a" style="left:1011px;top:750px;width:19px;height:19px;background:#fff;border:1px solid #8a8a8a"></div>
<svg class="a" style="left:1016px;top:754px" width="8" height="11" viewBox="0 0 8 11"><path d="M6 0.5v10L1 5.5z" fill="#222"/></svg>
<div class="a" style="left:1029px;top:750px;width:533px;height:19px;background:#fff;border:1px solid #8a8a8a;border-left:2px solid #8a8a8a"></div>
<div class="a" style="left:1562px;top:750px;width:30px;height:19px;background:#f2f2f0"></div>
<div class="a" style="left:1592px;top:750px;width:20px;height:19px;background:#fff;border:1px solid #8a8a8a"></div>
<svg class="a" style="left:1598px;top:754px" width="8" height="11" viewBox="0 0 8 11"><path d="M1 0.5v10L6 5.5z" fill="#222"/></svg>
<div class="a" style="left:36px;top:775px;width:1566px;height:25px;background:#f2f2f0"></div>
<div class="a" style="left:36px;top:800px;width:1566px;height:1px;background:#fff"></div>
<div class="a" style="left:0;top:801px;width:1602px;height:1px;background:#000"></div>
<div class="t" style="left:45px;top:780px;font-size:15px;color:#444;">就绪</div>
<svg class="a" style="left:99px;top:779px" width="20" height="18" viewBox="99 779 20 18">
<path d="M100.9 795.5V780.9h16.3v4.5" fill="none" stroke="#505050" stroke-width="1.5"/>
<path d="M100.9 783.6h16.3" stroke="#505050" stroke-width="1.5"/>
<path d="M100.9 794.8h5.5" stroke="#505050" stroke-width="1.5"/>
<path d="M103 785.8h3M103 788.5h1.6M103 791h1.6" stroke="#606060" stroke-width="1.2"/>
<circle cx="112" cy="791" r="4.6" fill="#f2f2f0" stroke="#505050" stroke-width="1.4"/>
<circle cx="112" cy="791" r="2" fill="#404040"/>
</svg>
<svg class="a" style="left:138px;top:778px" width="22" height="20" viewBox="138 778 22 20">
<circle cx="147.6" cy="782.3" r="1.9" fill="none" stroke="#404040" stroke-width="1.2"/>
<path d="M151.5 788.5l1.5-1.2c1.5-1 1.5-3-.5-3h-9.5c-2 0-2.3 2-.6 2.8l1.6.9-1 6.3c-.3 1.8 1.8 2 2.4.5l1-2.6" fill="none" stroke="#404040" stroke-width="1.2"/>
<path d="M149.5 788.3l8 8.2M157.5 788.3l-8 8.2" stroke="#404040" stroke-width="1.1"/>
</svg>
<div class="t" style="left:162px;top:780px;font-size:15px;color:#444;">辅助功能: 调查</div>
<div class="a" style="left:1256px;top:775px;width:50px;height:25px;background:#d4d4d4"></div>
<svg class="a" style="left:1270px;top:778px" width="22" height="20" viewBox="0 0 22 20"><rect x="2.5" y="1.5" width="16" height="16" fill="none" stroke="#555" stroke-width="1.6"/><path d="M2.5 6.8h16M2.5 12.2h16M7.8 1.5v16M13.2 1.5v16" stroke="#555" stroke-width="1.4"/></svg>
<svg class="a" style="left:1320px;top:778px" width="22" height="20" viewBox="0 0 22 20"><rect x="2.5" y="1.5" width="17" height="16" fill="none" stroke="#666" stroke-width="1.5"/><rect x="6" y="4.5" width="10" height="10" fill="none" stroke="#666" stroke-width="1.3"/><path d="M8 8h6M8 11h6" stroke="#666" stroke-width="1.2"/></svg>
<svg class="a" style="left:1370px;top:778px" width="22" height="20" viewBox="0 0 22 20"><rect x="2.5" y="1.5" width="17" height="16" fill="none" stroke="#666" stroke-width="1.5"/><path d="M2.5 11h10v-9.5M7.5 2v9" fill="none" stroke="#666" stroke-width="1.3"/></svg>
<div class="a" style="left:1413px;top:787px;width:9px;height:1px;background:#555"></div>
<div class="a" style="left:1429px;top:788px;width:125px;height:1px;background:#444"></div>
<div class="a" style="left:1489px;top:781px;width:6px;height:14px;background:#4a4a4a"></div>
<svg class="a" style="left:1559px;top:782px" width="12" height="12" viewBox="0 0 12 12"><path d="M1 6h10M6 1v10" stroke="#555" stroke-width="1"/></svg>
<div class="t" style="left:1587px;top:781px;font-size:15px;color:#666;">10</div>
<svg class="a" style="left:1340px;top:723px" width="16" height="22" viewBox="0 0 16 22"><path d="M1.5 1.5v15l3.5-3.5 3 6.5 2.5-1.2-3-6.3h5z" fill="#fff" stroke="#222" stroke-width="1.1"/></svg>
<div class="a" style="left:36px;top:0;width:1px;height:801px;background:rgba(255,255,255,.65)"></div>
</body></html>
